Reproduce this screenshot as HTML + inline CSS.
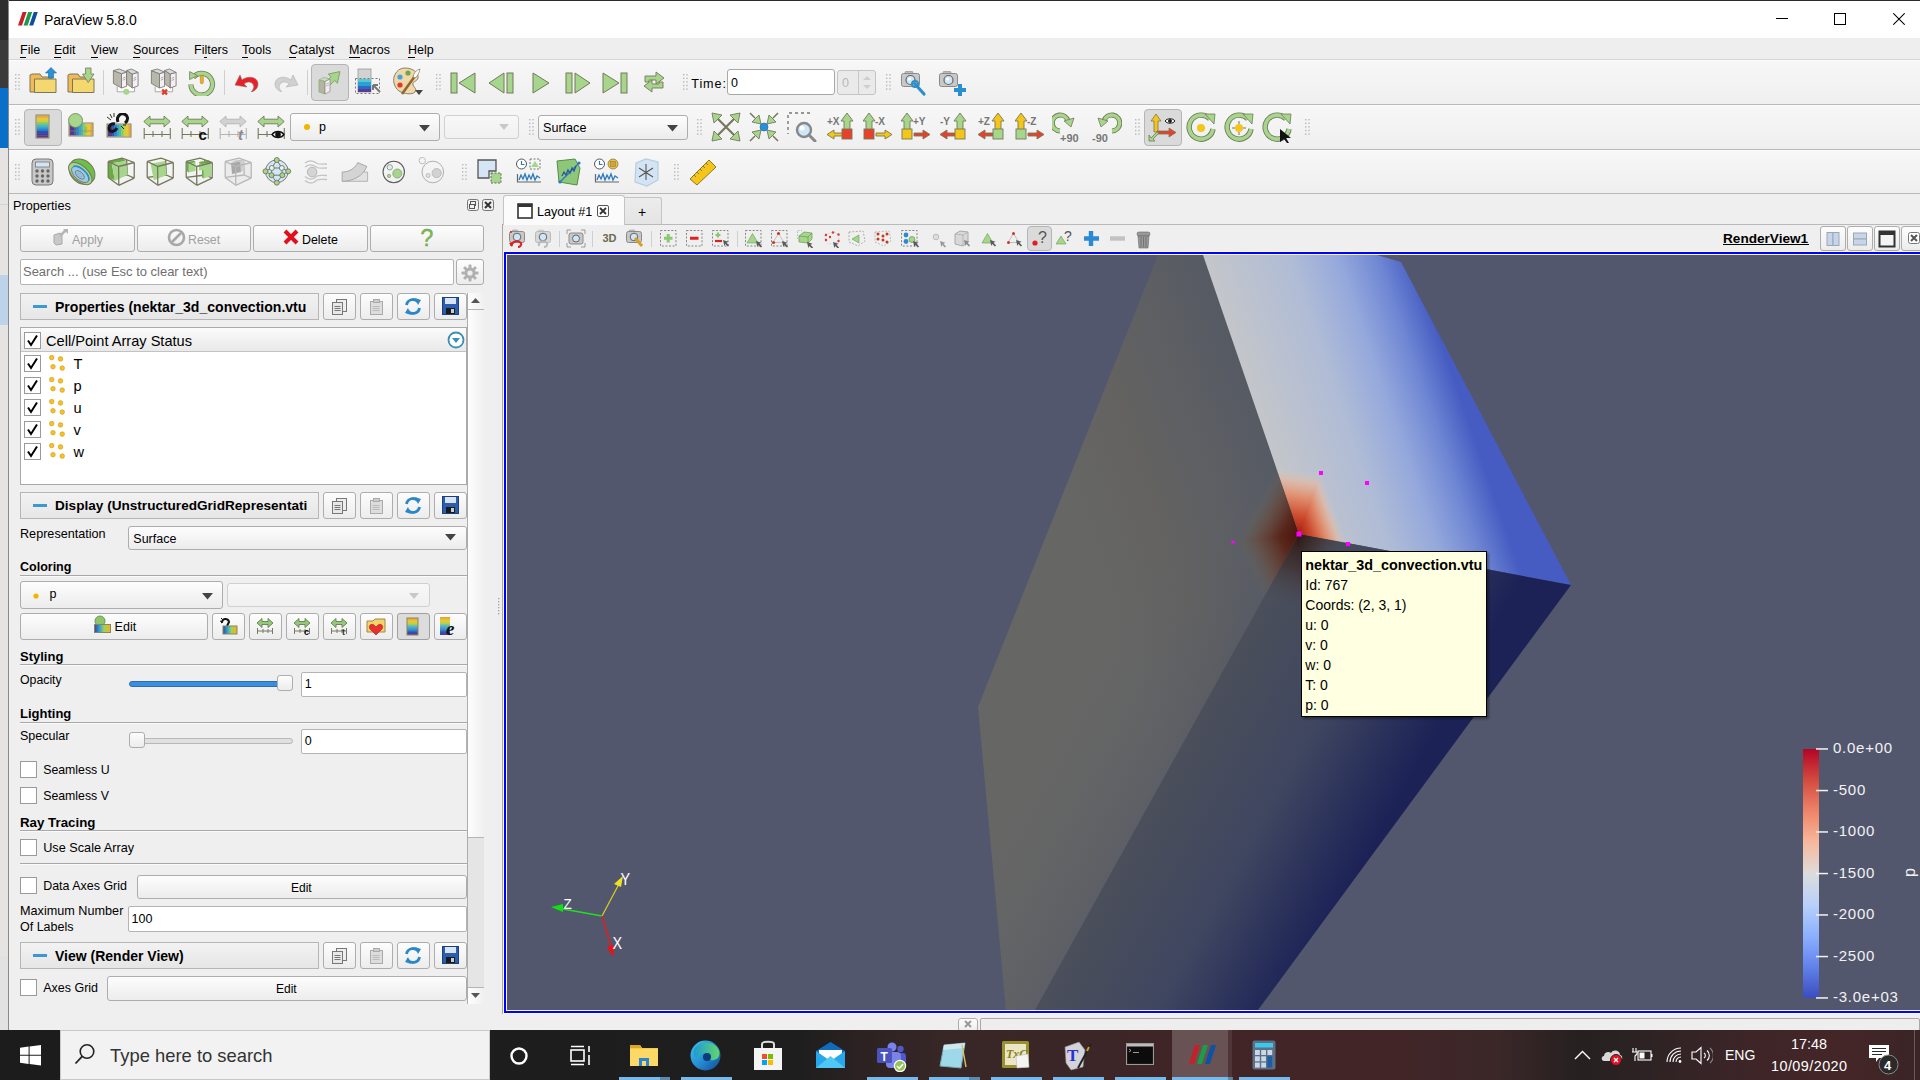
<!DOCTYPE html><html><head><meta charset="utf-8"><style>
html,body{margin:0;padding:0;width:1920px;height:1080px;overflow:hidden;position:relative;background:#e4e4e4;font-family:"Liberation Sans",sans-serif}
.t{position:absolute;white-space:nowrap;line-height:1;font-family:"Liberation Sans",sans-serif}
.r{position:absolute;box-sizing:border-box}
.btn{position:absolute;box-sizing:border-box;border:1px solid #adadad;border-radius:3px;background:linear-gradient(#fdfdfd,#ececec)}
.inp{position:absolute;box-sizing:border-box;border:1px solid #b4b4b4;border-radius:2px;background:#fff}
.cb{position:absolute;box-sizing:border-box;border:1px solid #9a9a9a;background:#fff;width:17px;height:17px}
.tb{position:absolute;left:9px;width:1911px;box-sizing:border-box;background:linear-gradient(#f7f7f7,#efefef);border-top:1px solid #fcfcfc;border-bottom:1px solid #b9b9b9}
</style></head><body>
<div class="r" style="left:0px;top:0px;width:9px;height:40px;background:#2d2d2d"></div>
<div class="r" style="left:0px;top:40px;width:9px;height:48px;background:#3a3a3a"></div>
<div class="r" style="left:0px;top:88px;width:9px;height:60px;background:#0a6fc9"></div>
<div class="r" style="left:0px;top:149px;width:9px;height:126px;background:#e5e4e2"></div>
<div class="r" style="left:0px;top:204px;width:9px;height:1px;background:#d4d4d4"></div>
<div class="r" style="left:0px;top:275px;width:9px;height:50px;background:#bcd3ea"></div>
<div class="r" style="left:0px;top:325px;width:9px;height:631px;background:#e5e4e2"></div>
<div class="r" style="left:0px;top:956px;width:9px;height:74px;background:#e2e2e2"></div>
<div class="r" style="left:8px;top:0px;width:1px;height:1030px;background:#8a8a8a"></div>
<div class="r" style="left:9px;top:0px;width:1911px;height:38px;background:#fff;border-top:1px solid #2b2b2b"></div>
<svg class="r" style="left:18px;top:12px;" width="20" height="14" viewBox="0 0 20 14"><polygon points="4.6,0 8.6,0 4,13.5 0,13.5" fill="#c42128"/><polygon points="10.2,0 14.2,0 9.6,13.5 5.6,13.5" fill="#1d9a48"/><polygon points="15.8,0 19.8,0 15.2,13.5 11.2,13.5" fill="#0d4f9c"/></svg>
<div class="t" style="left:44px;top:13.05px;font-size:14.0px;color:#000;letter-spacing:-0.15px">ParaView 5.8.0</div>
<div class="r" style="left:1776px;top:18px;width:12px;height:1px;background:#000"></div>
<div class="r" style="left:1834px;top:13px;width:12px;height:12px;border:1px solid #000"></div>
<svg class="r" style="left:1893px;top:13px;" width="12" height="12" viewBox="0 0 12 12"><path d="M0.3,0.3L11.7,11.7M11.7,0.3L0.3,11.7" stroke="#000" stroke-width="1.05"/></svg>
<div class="r" style="left:9px;top:38px;width:1911px;height:22px;background:#eeeeee;border-bottom:1px solid #d6d6d6"></div>
<div class="t" style="left:20px;top:43.92px;font-size:12.5px;color:#000;">File</div>
<div class="t" style="left:54px;top:43.92px;font-size:12.5px;color:#000;">Edit</div>
<div class="t" style="left:91px;top:43.92px;font-size:12.5px;color:#000;">View</div>
<div class="t" style="left:133px;top:43.92px;font-size:12.5px;color:#000;">Sources</div>
<div class="t" style="left:194px;top:43.92px;font-size:12.5px;color:#000;">Filters</div>
<div class="t" style="left:242px;top:43.92px;font-size:12.5px;color:#000;">Tools</div>
<div class="t" style="left:289px;top:43.92px;font-size:12.5px;color:#000;">Catalyst</div>
<div class="t" style="left:349px;top:43.92px;font-size:12.5px;color:#000;">Macros</div>
<div class="t" style="left:408px;top:43.92px;font-size:12.5px;color:#000;">Help</div>
<div class="r" style="left:20px;top:57px;width:6px;height:1px;background:#000"></div>
<div class="r" style="left:54px;top:57px;width:7px;height:1px;background:#000"></div>
<div class="r" style="left:91px;top:57px;width:7px;height:1px;background:#000"></div>
<div class="r" style="left:133px;top:57px;width:7px;height:1px;background:#000"></div>
<div class="r" style="left:242px;top:57px;width:6px;height:1px;background:#000"></div>
<div class="r" style="left:289px;top:57px;width:7px;height:1px;background:#000"></div>
<div class="r" style="left:349px;top:57px;width:11px;height:1px;background:#000"></div>
<div class="r" style="left:408px;top:57px;width:7px;height:1px;background:#000"></div>
<div class="r" style="left:204px;top:57px;width:3px;height:1px;background:#000"></div>
<div class="tb" style="top:60px;height:45px"></div>
<div class="tb" style="top:105px;height:45px"></div>
<div class="tb" style="top:150px;height:44px"></div>
<div class="r" style="left:9px;top:194px;width:1911px;height:836px;background:#efefef"></div>
<svg class="r" style="left:15px;top:74px;" width="6" height="19.0" viewBox="0 0 6 19.0"><rect x="0.0" y="0.0" width="1.4" height="1.4" fill="#b8b8b8"/><rect x="3.3" y="0.0" width="1.4" height="1.4" fill="#b8b8b8"/><rect x="0.0" y="3.6" width="1.4" height="1.4" fill="#b8b8b8"/><rect x="3.3" y="3.6" width="1.4" height="1.4" fill="#b8b8b8"/><rect x="0.0" y="7.2" width="1.4" height="1.4" fill="#b8b8b8"/><rect x="3.3" y="7.2" width="1.4" height="1.4" fill="#b8b8b8"/><rect x="0.0" y="10.8" width="1.4" height="1.4" fill="#b8b8b8"/><rect x="3.3" y="10.8" width="1.4" height="1.4" fill="#b8b8b8"/><rect x="0.0" y="14.4" width="1.4" height="1.4" fill="#b8b8b8"/><rect x="3.3" y="14.4" width="1.4" height="1.4" fill="#b8b8b8"/></svg>
<svg class="r" style="left:29px;top:67px;" width="28" height="27" viewBox="0 0 28 27"><path d="M1,8 L1,25 L22,25 L22,10 L13,10 L11,7 L3,7Z" fill="#f3b957" stroke="#76785c" stroke-width="1"/><path d="M5.5,12 L27,12 L27,25.5 L5.5,25.5Z" fill="#f5d770" stroke="#76785c" stroke-width="1"/><path d="M22,0.5 L27.5,6 L24.5,6 L24.5,11 L19.5,11 L19.5,6 L16.5,6Z" fill="#2a90d8" stroke="#1a6aa0" stroke-width="0.6"/></svg>
<svg class="r" style="left:67px;top:67px;" width="28" height="27" viewBox="0 0 28 27"><path d="M1,8 L1,25 L22,25 L22,10 L13,10 L11,7 L3,7Z" fill="#f3b957" stroke="#76785c" stroke-width="1"/><path d="M5.5,12 L27,12 L27,25.5 L5.5,25.5Z" fill="#f5d770" stroke="#76785c" stroke-width="1"/><path d="M18.5,1 L24,1 L24,7 L27,7 L21.2,15.5 L15.5,7 L18.5,7Z" fill="#a5d68c" stroke="#76785c" stroke-width="0.8"/></svg>
<div class="r" style="left:103px;top:70px;width:1px;height:25px;background:#cfcfcf"></div>
<svg class="r" style="left:110px;top:64px;" width="30" height="32" viewBox="0 0 30 32"><path d="M7.2,22.5 L7.2,27.8 L24.6,27.8 L24.6,22.5" fill="#fff" stroke="#a8a8a8" stroke-width="1"/><path d="M3.4,6.6 L11.5,9.7 L11.5,24.0 L3.4,19.5Z" fill="#b8b8a8" stroke="#7c7c78" stroke-width="0.9" stroke-linejoin="round"/><path d="M11.5,9.7 L16.6,8.0 L16.6,22.3 L11.5,24.0Z" fill="#f6eef4" stroke="#7c7c78" stroke-width="0.9" stroke-linejoin="round"/><path d="M3.4,6.6 L9.3,5.0 L16.6,8.0 L11.5,9.7Z" fill="#d6dada" stroke="#7c7c78" stroke-width="0.9" stroke-linejoin="round"/><path d="M12.8,14.2 l2.6,-1.2 M12.8,16.2 l2.6,-1.2" stroke="#888" stroke-width="0.7"/><path d="M16.6,6.5 L22.3,10.0 L22.3,24.0 L16.6,19.5Z" fill="#b8b8a8" stroke="#7c7c78" stroke-width="0.9" stroke-linejoin="round"/><path d="M22.3,10.0 L28.1,8.4 L28.1,21.8 L22.3,24.0Z" fill="#f6eef4" stroke="#7c7c78" stroke-width="0.9" stroke-linejoin="round"/><path d="M16.6,6.5 L21.5,5.0 L28.1,8.4 L22.3,10.0Z" fill="#d6dada" stroke="#7c7c78" stroke-width="0.9" stroke-linejoin="round"/><path d="M23.6,14.5 l2.6,-1.2 M23.6,16.5 l2.6,-1.2" stroke="#888" stroke-width="0.7"/><circle cx="16.3" cy="27.8" r="3" fill="#a5d68c"/></svg>
<svg class="r" style="left:148px;top:64px;" width="30" height="32" viewBox="0 0 30 32"><path d="M7.2,22.5 L7.2,27.8 L24.6,27.8 L24.6,22.5" fill="#fff" stroke="#a8a8a8" stroke-width="1"/><path d="M3.4,6.6 L11.5,9.7 L11.5,24.0 L3.4,19.5Z" fill="#b8b8a8" stroke="#7c7c78" stroke-width="0.9" stroke-linejoin="round"/><path d="M11.5,9.7 L16.6,8.0 L16.6,22.3 L11.5,24.0Z" fill="#f6eef4" stroke="#7c7c78" stroke-width="0.9" stroke-linejoin="round"/><path d="M3.4,6.6 L9.3,5.0 L16.6,8.0 L11.5,9.7Z" fill="#d6dada" stroke="#7c7c78" stroke-width="0.9" stroke-linejoin="round"/><path d="M12.8,14.2 l2.6,-1.2 M12.8,16.2 l2.6,-1.2" stroke="#888" stroke-width="0.7"/><path d="M16.6,6.5 L22.3,10.0 L22.3,24.0 L16.6,19.5Z" fill="#b8b8a8" stroke="#7c7c78" stroke-width="0.9" stroke-linejoin="round"/><path d="M22.3,10.0 L28.1,8.4 L28.1,21.8 L22.3,24.0Z" fill="#f6eef4" stroke="#7c7c78" stroke-width="0.9" stroke-linejoin="round"/><path d="M16.6,6.5 L21.5,5.0 L28.1,8.4 L22.3,10.0Z" fill="#d6dada" stroke="#7c7c78" stroke-width="0.9" stroke-linejoin="round"/><path d="M23.6,14.5 l2.6,-1.2 M23.6,16.5 l2.6,-1.2" stroke="#888" stroke-width="0.7"/><path d="M14.2,25.6 L19,30.4 M19,25.6 L14.2,30.4" stroke="#e03a2a" stroke-width="2.2"/></svg>
<svg class="r" style="left:188px;top:68px;" width="28" height="28" viewBox="0 0 28 28"><path d="M5.2,9.5 A10.8,10.8 0 1 1 2.9,16.5" fill="none" stroke="#76785c" stroke-width="5.2"/><path d="M5.2,9.5 A10.8,10.8 0 1 1 2.9,16.5" fill="none" stroke="#a5d68c" stroke-width="3.6"/><path d="M1.6,3.6 L9.6,7.6 L1.6,11.6Z" fill="#a5d68c" stroke="#76785c" stroke-width="0.8"/><rect x="12.3" y="7.3" width="3" height="8.5" rx="1.4" fill="#f2b020" stroke="#9a7a20" stroke-width="0.5"/></svg>
<div class="r" style="left:224px;top:70px;width:1px;height:25px;background:#cfcfcf"></div>
<svg class="r" style="left:234px;top:72px;" width="27" height="20" viewBox="0 0 27 20"><path d="M1,13 L6,3 L8,8 C14,3 24,5 24,12 C24,17 20,19 17,20 C20,17 21,14 18,11 C15,9 12,10 10,12 L13,15Z" fill="#e8202a" stroke="#8a6a5a" stroke-width="0.6"/></svg>
<svg class="r" style="left:272px;top:72px;" width="27" height="20" viewBox="0 0 27 20"><path d="M26,13 L21,3 L19,8 C13,3 3,5 3,12 C3,17 7,19 10,20 C7,17 6,14 9,11 C12,9 15,10 17,12 L14,15Z" fill="#d0d0d0" stroke="#b0b0b0" stroke-width="0.6"/></svg>
<div class="r" style="left:307px;top:70px;width:1px;height:25px;background:#cfcfcf"></div>
<div class="r" style="left:311px;top:64px;width:38px;height:37px;background:#dadada;border:1px solid #b5b5b5;border-radius:4px"></div>
<svg class="r" style="left:317px;top:68px;" width="27" height="27" viewBox="0 0 27 27"><path d="M0,-2.6 L9,-2.6 L9,-6.5 L19,0 L9,6.5 L9,2.6 L0,2.6Z" fill="#a5d68c" stroke="#7a9a60" stroke-width="0.8" transform="translate(9.5,17) rotate(-45)"/><path d="M2,12 L7,9.5 L13,11 L8,13.5Z" fill="#d6d6d0" stroke="#8ab070" stroke-width="0.7"/><path d="M2,12 L8,13.5 L8,26 L2,24Z" fill="#b4b4a6" stroke="#8ab070" stroke-width="0.8"/><path d="M8,13.5 L13,11 L13,23.5 L8,26Z" fill="#f2eaf2" stroke="#7a7a70" stroke-width="0.6"/><path d="M9,16 L12,15 M9,18 L12,17" stroke="#888" stroke-width="0.5"/></svg>
<svg class="r" style="left:355px;top:68px;" width="27" height="27" viewBox="0 0 27 27"><rect x="3" y="1" width="13" height="23" fill="#d2d2d2" stroke="#999" stroke-width="0.8"/><rect x="3" y="11" width="13" height="13" fill="url(#cmapv2)"/><rect x="0.5" y="10.5" width="24" height="15" fill="none" stroke="#777" stroke-dasharray="2,2"/><path d="M18,17 L25,24 M18,17 L18,22 M18,17 L23,17" stroke="#777" stroke-width="2"/></svg>
<svg width="0" height="0" style="position:absolute"><defs><linearGradient id="cmapv2" x1="0" x2="0" y1="0" y2="1"><stop offset="0" stop-color="#58c8d0"/><stop offset="0.25" stop-color="#58c8d0"/><stop offset="0.25" stop-color="#2aa0d8"/><stop offset="0.5" stop-color="#2aa0d8"/><stop offset="0.5" stop-color="#2a6ac0"/><stop offset="0.75" stop-color="#2a6ac0"/><stop offset="0.75" stop-color="#5a3a98"/><stop offset="1" stop-color="#5a3a98"/></linearGradient></defs></svg>
<svg class="r" style="left:392px;top:67px;" width="32" height="30" viewBox="0 0 32 30"><path d="M13,1 C21,1 27,6 26,11 C25,15 20,14 21,18 C22,21 25,21 23,25 C20,28 12,27 7,24 C2,20 1,14 2,10 C4,4 8,1 13,1Z" fill="#f4d7a8" stroke="#76785c" stroke-width="0.9"/><circle cx="8" cy="10" r="2.6" fill="#3aa5e0"/><circle cx="16" cy="6" r="2.6" fill="#6aa84a"/><circle cx="8" cy="18" r="2.6" fill="#e03a2a"/><path d="M10,27 L23,9" stroke="#8a6a30" stroke-width="2.6"/><path d="M21,10 C22,5 25,3 28,2 C27,6 26,9 23,11Z" fill="#fff" stroke="#76785c" stroke-width="0.7"/><path d="M23,23 L31,23 L27,28Z" fill="#444"/></svg>
<svg class="r" style="left:436px;top:74px;" width="6" height="19.0" viewBox="0 0 6 19.0"><rect x="0.0" y="0.0" width="1.4" height="1.4" fill="#b8b8b8"/><rect x="3.3" y="0.0" width="1.4" height="1.4" fill="#b8b8b8"/><rect x="0.0" y="3.6" width="1.4" height="1.4" fill="#b8b8b8"/><rect x="3.3" y="3.6" width="1.4" height="1.4" fill="#b8b8b8"/><rect x="0.0" y="7.2" width="1.4" height="1.4" fill="#b8b8b8"/><rect x="3.3" y="7.2" width="1.4" height="1.4" fill="#b8b8b8"/><rect x="0.0" y="10.8" width="1.4" height="1.4" fill="#b8b8b8"/><rect x="3.3" y="10.8" width="1.4" height="1.4" fill="#b8b8b8"/><rect x="0.0" y="14.4" width="1.4" height="1.4" fill="#b8b8b8"/><rect x="3.3" y="14.4" width="1.4" height="1.4" fill="#b8b8b8"/></svg>
<svg class="r" style="left:450px;top:72px;" width="27" height="23" viewBox="0 0 27 23"><rect x="1" y="1" width="6" height="20" fill="#a5d68c" stroke="#76785c"/><path d="M25,1 L25,21 L9,11Z" fill="#a5d68c" stroke="#76785c"/></svg>
<svg class="r" style="left:488px;top:72px;" width="27" height="23" viewBox="0 0 27 23"><path d="M16,1 L16,21 L1,11Z" fill="#a5d68c" stroke="#76785c"/><rect x="19" y="1" width="6" height="20" fill="#a5d68c" stroke="#76785c"/></svg>
<svg class="r" style="left:532px;top:72px;" width="27" height="23" viewBox="0 0 27 23"><path d="M1,1 L1,21 L17,11Z" fill="#a5d68c" stroke="#76785c"/></svg>
<svg class="r" style="left:565px;top:72px;" width="27" height="23" viewBox="0 0 27 23"><rect x="1" y="1" width="6" height="20" fill="#a5d68c" stroke="#76785c"/><path d="M10,1 L10,21 L25,11Z" fill="#a5d68c" stroke="#76785c"/></svg>
<svg class="r" style="left:602px;top:72px;" width="27" height="23" viewBox="0 0 27 23"><path d="M1,1 L1,21 L17,11Z" fill="#a5d68c" stroke="#76785c"/><rect x="19" y="1" width="6" height="20" fill="#a5d68c" stroke="#76785c"/></svg>
<svg class="r" style="left:642px;top:70px;" width="24" height="25" viewBox="0 0 24 25"><path d="M3,12 L3,6 L14,6 L14,2 L22,8 L14,14 L14,10 L7,10 L7,12Z" fill="#a5d68c" stroke="#76785c" stroke-width="0.9"/><path d="M21,12 L21,18 L10,18 L10,22 L2,16 L10,10 L10,14 L17,14 L17,12Z" fill="#a5d68c" stroke="#76785c" stroke-width="0.9"/></svg>
<svg class="r" style="left:683px;top:74px;" width="6" height="19.0" viewBox="0 0 6 19.0"><rect x="0.0" y="0.0" width="1.4" height="1.4" fill="#b8b8b8"/><rect x="3.3" y="0.0" width="1.4" height="1.4" fill="#b8b8b8"/><rect x="0.0" y="3.6" width="1.4" height="1.4" fill="#b8b8b8"/><rect x="3.3" y="3.6" width="1.4" height="1.4" fill="#b8b8b8"/><rect x="0.0" y="7.2" width="1.4" height="1.4" fill="#b8b8b8"/><rect x="3.3" y="7.2" width="1.4" height="1.4" fill="#b8b8b8"/><rect x="0.0" y="10.8" width="1.4" height="1.4" fill="#b8b8b8"/><rect x="3.3" y="10.8" width="1.4" height="1.4" fill="#b8b8b8"/><rect x="0.0" y="14.4" width="1.4" height="1.4" fill="#b8b8b8"/><rect x="3.3" y="14.4" width="1.4" height="1.4" fill="#b8b8b8"/></svg>
<div class="t" style="left:691.3px;top:78.03px;font-size:12.6px;color:#000;letter-spacing:0.9px">Time:</div>
<div class="inp" style="left:727px;top:69px;width:108px;height:26px;border-color:#a8a8a8;border-radius:3px"></div>
<div class="t" style="left:731px;top:77.42px;font-size:12.5px;color:#000;">0</div>
<div class="r" style="left:837px;top:70px;width:39px;height:25px;background:#eaeaea;border:1px solid #c4c4c4;border-radius:3px"></div>
<div class="r" style="left:858px;top:71px;width:1px;height:23px;background:#c8c8c8"></div>
<div class="t" style="left:842px;top:77.42px;font-size:12.5px;color:#b8b8b8;">0</div>
<svg class="r" style="left:860px;top:73px;" width="14" height="19" viewBox="0 0 14 19"><path d="M3,7 L7,3 L11,7Z" fill="#cfcfcf"/><path d="M3,12 L7,16 L11,12Z" fill="#cfcfcf"/></svg>
<svg class="r" style="left:886px;top:74px;" width="6" height="19.0" viewBox="0 0 6 19.0"><rect x="0.0" y="0.0" width="1.4" height="1.4" fill="#b8b8b8"/><rect x="3.3" y="0.0" width="1.4" height="1.4" fill="#b8b8b8"/><rect x="0.0" y="3.6" width="1.4" height="1.4" fill="#b8b8b8"/><rect x="3.3" y="3.6" width="1.4" height="1.4" fill="#b8b8b8"/><rect x="0.0" y="7.2" width="1.4" height="1.4" fill="#b8b8b8"/><rect x="3.3" y="7.2" width="1.4" height="1.4" fill="#b8b8b8"/><rect x="0.0" y="10.8" width="1.4" height="1.4" fill="#b8b8b8"/><rect x="3.3" y="10.8" width="1.4" height="1.4" fill="#b8b8b8"/><rect x="0.0" y="14.4" width="1.4" height="1.4" fill="#b8b8b8"/><rect x="3.3" y="14.4" width="1.4" height="1.4" fill="#b8b8b8"/></svg>
<svg class="r" style="left:901px;top:70px;" width="30" height="27" viewBox="0 0 30 27"><rect x="4" y="1.5" width="8" height="3" rx="1" fill="#bbb" stroke="#888" stroke-width="0.6"/><rect x="0.5" y="3.5" width="18" height="13" rx="2" fill="#c8c8c8" stroke="#8a8a8a"/><circle cx="9.5" cy="10" r="4.5" fill="#cfe6f6" stroke="#666" stroke-width="1.2"/><circle cx="8.6" cy="9" r="1.5" fill="#fff"/><path d="M14,14 L23,24" stroke="#2a8fc8" stroke-width="3.2" stroke-linecap="round"/><circle cx="14" cy="14" r="3" fill="none" stroke="#2a8fc8" stroke-width="2"/></svg>
<svg class="r" style="left:939px;top:70px;" width="30" height="27" viewBox="0 0 30 27"><rect x="4" y="1.5" width="8" height="3" rx="1" fill="#bbb" stroke="#888" stroke-width="0.6"/><rect x="0.5" y="3.5" width="18" height="13" rx="2" fill="#c8c8c8" stroke="#8a8a8a"/><circle cx="9.5" cy="10" r="4.5" fill="#cfe6f6" stroke="#666" stroke-width="1.2"/><circle cx="8.6" cy="9" r="1.5" fill="#fff"/><path d="M21,14 L21,26 M15,20 L27,20" stroke="#2a8fd0" stroke-width="4"/></svg>
<svg class="r" style="left:15px;top:119px;" width="6" height="19.0" viewBox="0 0 6 19.0"><rect x="0.0" y="0.0" width="1.4" height="1.4" fill="#b8b8b8"/><rect x="3.3" y="0.0" width="1.4" height="1.4" fill="#b8b8b8"/><rect x="0.0" y="3.6" width="1.4" height="1.4" fill="#b8b8b8"/><rect x="3.3" y="3.6" width="1.4" height="1.4" fill="#b8b8b8"/><rect x="0.0" y="7.2" width="1.4" height="1.4" fill="#b8b8b8"/><rect x="3.3" y="7.2" width="1.4" height="1.4" fill="#b8b8b8"/><rect x="0.0" y="10.8" width="1.4" height="1.4" fill="#b8b8b8"/><rect x="3.3" y="10.8" width="1.4" height="1.4" fill="#b8b8b8"/><rect x="0.0" y="14.4" width="1.4" height="1.4" fill="#b8b8b8"/><rect x="3.3" y="14.4" width="1.4" height="1.4" fill="#b8b8b8"/></svg>
<div class="r" style="left:24px;top:109px;width:38px;height:37px;background:#dadada;border:1px solid #b5b5b5;border-radius:4px"></div>
<svg class="r" style="left:35px;top:114px;" width="16" height="25" viewBox="0 0 16 25"><rect x="1.5" y="1.50" width="12" height="2.50" fill="#e8a83a"/><rect x="1.5" y="3.70" width="12" height="2.50" fill="#e8c83a"/><rect x="1.5" y="5.90" width="12" height="2.50" fill="#c8d048"/><rect x="1.5" y="8.10" width="12" height="2.50" fill="#90c858"/><rect x="1.5" y="10.30" width="12" height="2.50" fill="#50b8a8"/><rect x="1.5" y="12.50" width="12" height="2.50" fill="#30a8d0"/><rect x="1.5" y="14.70" width="12" height="2.50" fill="#2a80d0"/><rect x="1.5" y="16.90" width="12" height="2.50" fill="#2a50b0"/><rect x="1.5" y="19.10" width="12" height="2.50" fill="#4a3a98"/><rect x="1.5" y="21.30" width="12" height="2.50" fill="#5a3a88"/><rect x="1" y="1" width="13" height="23" fill="none" stroke="#8a8560"/></svg>
<svg class="r" style="left:68px;top:113px;" width="26" height="26" viewBox="0 0 26 26"><rect x="1.50" y="10.5" width="2.60" height="12" fill="#5a3a88"/><rect x="3.80" y="10.5" width="2.60" height="12" fill="#4a3a98"/><rect x="6.10" y="10.5" width="2.60" height="12" fill="#2a50b0"/><rect x="8.40" y="10.5" width="2.60" height="12" fill="#2a80d0"/><rect x="10.70" y="10.5" width="2.60" height="12" fill="#30a8d0"/><rect x="13.00" y="10.5" width="2.60" height="12" fill="#50b8a8"/><rect x="15.30" y="10.5" width="2.60" height="12" fill="#90c858"/><rect x="17.60" y="10.5" width="2.60" height="12" fill="#c8d048"/><rect x="19.90" y="10.5" width="2.60" height="12" fill="#e8c83a"/><rect x="22.20" y="10.5" width="2.60" height="12" fill="#e8a83a"/><rect x="1" y="10" width="24" height="13" fill="none" stroke="#8a8560"/><path d="M7,13v9M18,14v6M2,18h22" stroke="#8a8560" stroke-width="0.8" opacity="0.7"/><circle cx="7.5" cy="7.5" r="7" fill="#a5d68c" stroke="#76785c" stroke-width="0.8"/></svg>
<svg class="r" style="left:106px;top:113px;" width="26" height="26" viewBox="0 0 26 26"><rect x="1.50" y="11.5" width="2.60" height="12" fill="#5a3a88"/><rect x="3.80" y="11.5" width="2.60" height="12" fill="#4a3a98"/><rect x="6.10" y="11.5" width="2.60" height="12" fill="#2a50b0"/><rect x="8.40" y="11.5" width="2.60" height="12" fill="#2a80d0"/><rect x="10.70" y="11.5" width="2.60" height="12" fill="#30a8d0"/><rect x="13.00" y="11.5" width="2.60" height="12" fill="#50b8a8"/><rect x="15.30" y="11.5" width="2.60" height="12" fill="#90c858"/><rect x="17.60" y="11.5" width="2.60" height="12" fill="#c8d048"/><rect x="19.90" y="11.5" width="2.60" height="12" fill="#e8c83a"/><rect x="22.20" y="11.5" width="2.60" height="12" fill="#e8a83a"/><rect x="1" y="11" width="24" height="13" fill="none" stroke="#8a8560"/><path d="M12,9 C10,4 14,0 18,1 C22,2 23,7 19,10" fill="none" stroke="#151515" stroke-width="3"/><path d="M11,15 C8,20 3,19 3,15 C3,12 6,10 9,11" fill="none" stroke="#151515" stroke-width="3"/><path d="M1,4L5,7M4,1L6,5M8,0L8,4M15,13L18,16M17,12L20,12" stroke="#151515" stroke-width="0.9"/></svg>
<svg class="r" style="left:143px;top:114px;" width="29" height="26" viewBox="0 0 29 26"><path d="M0.8,7.5 L7,2 L7,5.2 L21,5.2 L21,2 L27.2,7.5 L21,13 L21,9.8 L7,9.8 L7,13Z" fill="#a5d68c" stroke="#76785c" stroke-width="0.9"/><path d="M1,20.5h26.5M1.2,14v11M10,17v6M19,17v6M27.3,14v11" stroke="#76785c" stroke-width="1.1"/></svg>
<svg class="r" style="left:181px;top:114px;" width="29" height="26" viewBox="0 0 29 26"><path d="M0.8,7.5 L7,2 L7,5.2 L21,5.2 L21,2 L27.2,7.5 L21,13 L21,9.8 L7,9.8 L7,13Z" fill="#a5d68c" stroke="#76785c" stroke-width="0.9"/><path d="M1,20.5h26.5M1.2,14v11M10,17v6M19,17v6M27.3,14v11" stroke="#76785c" stroke-width="1.1"/><text x="17.5" y="25.5" font-size="15" font-weight="bold" font-family="Liberation Sans" fill="#111">c</text></svg>
<svg class="r" style="left:219px;top:114px;" width="29" height="26" viewBox="0 0 29 26"><path d="M0.8,7.5 L7,2 L7,5.2 L21,5.2 L21,2 L27.2,7.5 L21,13 L21,9.8 L7,9.8 L7,13Z" fill="#d2d2d2" stroke="#b4b4b4" stroke-width="0.9"/><path d="M1,20.5h26.5M1.2,14v11M10,17v6M19,17v6M27.3,14v11" stroke="#b4b4b4" stroke-width="1.1"/><text x="19" y="25.5" font-size="15" font-weight="bold" font-style="italic" font-family="Liberation Sans" fill="#8a8a8a">t</text></svg>
<svg class="r" style="left:257px;top:114px;" width="29" height="26" viewBox="0 0 29 26"><path d="M0.8,7.5 L7,2 L7,5.2 L21,5.2 L21,2 L27.2,7.5 L21,13 L21,9.8 L7,9.8 L7,13Z" fill="#a5d68c" stroke="#76785c" stroke-width="0.9"/><path d="M1,20.5h26.5M1.2,14v11M10,17v6M19,17v6M27.3,14v11" stroke="#76785c" stroke-width="1.1"/><path d="M15,20.5 C18,16.5 24,16.5 27,20.5 C24,24.5 18,24.5 15,20.5Z" fill="#fff" stroke="#111" stroke-width="1.3"/><circle cx="21" cy="20.5" r="2.8" fill="#111"/></svg>
<div class="btn" style="left:290px;top:113px;width:150px;height:28px"></div>
<svg class="r" style="left:303px;top:123px;" width="8" height="8" viewBox="0 0 8 8"><circle cx="4" cy="4" r="3" fill="#f3b400"/></svg>
<div class="t" style="left:319px;top:121.42px;font-size:12.5px;color:#000;">p</div>
<svg class="r" style="left:419px;top:125px;" width="12" height="7" viewBox="0 0 12 7"><path d="M0,0L11,0L5.5,6.5Z" fill="#444"/></svg>
<div class="btn" style="left:444px;top:115px;width:75px;height:24px;border-color:#d0d0d0;background:linear-gradient(#f8f8f8,#f0f0f0)"></div>
<svg class="r" style="left:499px;top:124px;" width="11" height="6" viewBox="0 0 11 6"><path d="M0,0L10,0L5,6Z" fill="#c8c8c8"/></svg>
<svg class="r" style="left:529px;top:119px;" width="6" height="19.0" viewBox="0 0 6 19.0"><rect x="0.0" y="0.0" width="1.4" height="1.4" fill="#b8b8b8"/><rect x="3.3" y="0.0" width="1.4" height="1.4" fill="#b8b8b8"/><rect x="0.0" y="3.6" width="1.4" height="1.4" fill="#b8b8b8"/><rect x="3.3" y="3.6" width="1.4" height="1.4" fill="#b8b8b8"/><rect x="0.0" y="7.2" width="1.4" height="1.4" fill="#b8b8b8"/><rect x="3.3" y="7.2" width="1.4" height="1.4" fill="#b8b8b8"/><rect x="0.0" y="10.8" width="1.4" height="1.4" fill="#b8b8b8"/><rect x="3.3" y="10.8" width="1.4" height="1.4" fill="#b8b8b8"/><rect x="0.0" y="14.4" width="1.4" height="1.4" fill="#b8b8b8"/><rect x="3.3" y="14.4" width="1.4" height="1.4" fill="#b8b8b8"/></svg>
<div class="btn" style="left:538px;top:115px;width:150px;height:25px"></div>
<div class="t" style="left:543px;top:121.83px;font-size:12.6px;color:#000;">Surface</div>
<svg class="r" style="left:667px;top:125px;" width="12" height="7" viewBox="0 0 12 7"><path d="M0,0L11,0L5.5,6.5Z" fill="#444"/></svg>
<svg class="r" style="left:697px;top:119px;" width="6" height="19.0" viewBox="0 0 6 19.0"><rect x="0.0" y="0.0" width="1.4" height="1.4" fill="#b8b8b8"/><rect x="3.3" y="0.0" width="1.4" height="1.4" fill="#b8b8b8"/><rect x="0.0" y="3.6" width="1.4" height="1.4" fill="#b8b8b8"/><rect x="3.3" y="3.6" width="1.4" height="1.4" fill="#b8b8b8"/><rect x="0.0" y="7.2" width="1.4" height="1.4" fill="#b8b8b8"/><rect x="3.3" y="7.2" width="1.4" height="1.4" fill="#b8b8b8"/><rect x="0.0" y="10.8" width="1.4" height="1.4" fill="#b8b8b8"/><rect x="3.3" y="10.8" width="1.4" height="1.4" fill="#b8b8b8"/><rect x="0.0" y="14.4" width="1.4" height="1.4" fill="#b8b8b8"/><rect x="3.3" y="14.4" width="1.4" height="1.4" fill="#b8b8b8"/></svg>
<svg class="r" style="left:711px;top:112px;" width="30" height="30" viewBox="0 0 30 30"><path d="M4,4 L26,26 M26,4 L4,26" stroke="#76785c" stroke-width="2.2"/><path d="M0,0 L10,2 L2,10Z" fill="#a5d68c" stroke="#76785c" stroke-width="0.9" transform="translate(1,1) rotate(0)"/><path d="M0,0 L10,2 L2,10Z" fill="#a5d68c" stroke="#76785c" stroke-width="0.9" transform="translate(29,1) rotate(90)"/><path d="M0,0 L10,2 L2,10Z" fill="#a5d68c" stroke="#76785c" stroke-width="0.9" transform="translate(29,29) rotate(180)"/><path d="M0,0 L10,2 L2,10Z" fill="#a5d68c" stroke="#76785c" stroke-width="0.9" transform="translate(1,29) rotate(270)"/></svg>
<svg class="r" style="left:749px;top:112px;" width="30" height="30" viewBox="0 0 30 30"><path d="M0,0 L9,2 L2,9Z" fill="#a5d68c" stroke="#76785c" stroke-width="0.9" transform="translate(12,12) rotate(180)"/><path d="M0,0 L9,2 L2,9Z" fill="#a5d68c" stroke="#76785c" stroke-width="0.9" transform="translate(18,12) rotate(270)"/><path d="M0,0 L9,2 L2,9Z" fill="#a5d68c" stroke="#76785c" stroke-width="0.9" transform="translate(18,18) rotate(0)"/><path d="M0,0 L9,2 L2,9Z" fill="#a5d68c" stroke="#76785c" stroke-width="0.9" transform="translate(12,18) rotate(90)"/><path d="M1,1 L6,6 M29,1 L24,6 M29,29 L24,24 M1,29 L6,24" stroke="#76785c" stroke-width="1.5"/><circle cx="15" cy="15" r="4" fill="#2a8fd6" stroke="#1a6aa0" stroke-width="0.6"/></svg>
<svg class="r" style="left:787px;top:112px;" width="30" height="30" viewBox="0 0 30 30"><path d="M1,12 L1,1 L24,1" fill="none" stroke="#777" stroke-width="1.4" stroke-dasharray="3,3"/><path d="M1,15 L1,22" stroke="#777" stroke-width="1.4" stroke-dasharray="3,3"/><circle cx="17" cy="18" r="7" fill="#cfe6f8" stroke="#888" stroke-width="2.4"/><circle cx="15" cy="16" r="2.5" fill="#fff"/><path d="M22,23 L28,29" stroke="#888" stroke-width="3" stroke-linecap="round"/></svg>
<svg class="r" style="left:826px;top:112px;" width="30" height="30" viewBox="0 0 30 30"><path d="M18,20 L18,9 L15,9 L21,1 L27,9 L24,9 L24,20Z" fill="#a5d68c" stroke="#76785c" stroke-width="0.9"/><path d="M17,24 L8,24 L8,27 L1,22.5 L8,18 L8,21 L17,21Z" fill="#f5c518" stroke="#76785c" stroke-width="0.9" transform="translate(0,0)"/><rect x="16" y="17" width="10" height="10" fill="#e8402a" stroke="#76785c" stroke-width="0.9"/><text x="1" y="13" font-size="10" font-weight="bold" font-family="Liberation Sans" fill="#777">+X</text></svg>
<svg class="r" style="left:863px;top:112px;" width="30" height="30" viewBox="0 0 30 30"><path d="M3,20 L3,9 L0,9 L6,1 L12,9 L9,9 L9,20Z" fill="#a5d68c" stroke="#76785c" stroke-width="0.9"/><path d="M13,21 L22,21 L22,18 L29,22.5 L22,27 L22,24 L13,24Z" fill="#f5c518" stroke="#76785c" stroke-width="0.9"/><rect x="1" y="17" width="10" height="10" fill="#e8402a" stroke="#76785c" stroke-width="0.9"/><text x="12" y="13" font-size="10" font-weight="bold" font-family="Liberation Sans" fill="#777">-X</text></svg>
<svg class="r" style="left:901px;top:112px;" width="30" height="30" viewBox="0 0 30 30"><path d="M3,20 L3,9 L0,9 L6,1 L12,9 L9,9 L9,20Z" fill="#a5d68c" stroke="#76785c" stroke-width="0.9"/><path d="M13,21 L22,21 L22,18 L29,22.5 L22,27 L22,24 L13,24Z" fill="#e8402a" stroke="#76785c" stroke-width="0.9"/><rect x="1" y="17" width="10" height="10" fill="#f5c518" stroke="#76785c" stroke-width="0.9"/><text x="12" y="13" font-size="10" font-weight="bold" font-family="Liberation Sans" fill="#777">+Y</text></svg>
<svg class="r" style="left:939px;top:112px;" width="30" height="30" viewBox="0 0 30 30"><path d="M18,20 L18,9 L15,9 L21,1 L27,9 L24,9 L24,20Z" fill="#a5d68c" stroke="#76785c" stroke-width="0.9"/><path d="M17,24 L8,24 L8,27 L1,22.5 L8,18 L8,21 L17,21Z" fill="#e8402a" stroke="#76785c" stroke-width="0.9" transform="translate(0,0)"/><rect x="16" y="17" width="10" height="10" fill="#f5c518" stroke="#76785c" stroke-width="0.9"/><text x="1" y="13" font-size="10" font-weight="bold" font-family="Liberation Sans" fill="#777">-Y</text></svg>
<svg class="r" style="left:977px;top:112px;" width="30" height="30" viewBox="0 0 30 30"><path d="M18,20 L18,9 L15,9 L21,1 L27,9 L24,9 L24,20Z" fill="#f5c518" stroke="#76785c" stroke-width="0.9"/><path d="M17,24 L8,24 L8,27 L1,22.5 L8,18 L8,21 L17,21Z" fill="#e8402a" stroke="#76785c" stroke-width="0.9" transform="translate(0,0)"/><rect x="16" y="17" width="10" height="10" fill="#a5d68c" stroke="#76785c" stroke-width="0.9"/><text x="1" y="13" font-size="10" font-weight="bold" font-family="Liberation Sans" fill="#777">+Z</text></svg>
<svg class="r" style="left:1015px;top:112px;" width="30" height="30" viewBox="0 0 30 30"><path d="M3,20 L3,9 L0,9 L6,1 L12,9 L9,9 L9,20Z" fill="#f5c518" stroke="#76785c" stroke-width="0.9"/><path d="M13,21 L22,21 L22,18 L29,22.5 L22,27 L22,24 L13,24Z" fill="#e8402a" stroke="#76785c" stroke-width="0.9"/><rect x="1" y="17" width="10" height="10" fill="#a5d68c" stroke="#76785c" stroke-width="0.9"/><text x="12" y="13" font-size="10" font-weight="bold" font-family="Liberation Sans" fill="#777">-Z</text></svg>
<svg class="r" style="left:1052px;top:112px;" width="32" height="32" viewBox="0 0 32 32"><path d="M16,9 A8,8 0 1 0 8,19" fill="none" stroke="#76785c" stroke-width="5.2"/><path d="M16,9 A8,8 0 1 0 8,19" fill="none" stroke="#a5d68c" stroke-width="3.4"/><path d="M12,9 L22,6 L19,15Z" fill="#a5d68c" stroke="#76785c" stroke-width="0.8"/><text x="8" y="30" font-size="11" font-weight="bold" font-family="Liberation Sans" fill="#777">+90</text></svg>
<svg class="r" style="left:1090px;top:112px;" width="32" height="32" viewBox="0 0 32 32"><path d="M14,9 A8,8 0 1 1 22,19" fill="none" stroke="#76785c" stroke-width="5.2"/><path d="M14,9 A8,8 0 1 1 22,19" fill="none" stroke="#a5d68c" stroke-width="3.4"/><path d="M18,9 L8,6 L11,15Z" fill="#a5d68c" stroke="#76785c" stroke-width="0.8"/><text x="2" y="30" font-size="11" font-weight="bold" font-family="Liberation Sans" fill="#777">-90</text></svg>
<svg class="r" style="left:1135px;top:119px;" width="6" height="19.0" viewBox="0 0 6 19.0"><rect x="0.0" y="0.0" width="1.4" height="1.4" fill="#b8b8b8"/><rect x="3.3" y="0.0" width="1.4" height="1.4" fill="#b8b8b8"/><rect x="0.0" y="3.6" width="1.4" height="1.4" fill="#b8b8b8"/><rect x="3.3" y="3.6" width="1.4" height="1.4" fill="#b8b8b8"/><rect x="0.0" y="7.2" width="1.4" height="1.4" fill="#b8b8b8"/><rect x="3.3" y="7.2" width="1.4" height="1.4" fill="#b8b8b8"/><rect x="0.0" y="10.8" width="1.4" height="1.4" fill="#b8b8b8"/><rect x="3.3" y="10.8" width="1.4" height="1.4" fill="#b8b8b8"/><rect x="0.0" y="14.4" width="1.4" height="1.4" fill="#b8b8b8"/><rect x="3.3" y="14.4" width="1.4" height="1.4" fill="#b8b8b8"/></svg>
<div class="r" style="left:1144px;top:109px;width:38px;height:37px;background:#dadada;border:1px solid #b5b5b5;border-radius:4px"></div>
<svg class="r" style="left:1148px;top:112px;" width="30" height="30" viewBox="0 0 30 30"><path d="M6,20 L6,9 L3,9 L8,2 L13,9 L10,9 L10,20Z" fill="#f5c518" stroke="#76785c" stroke-width="0.8"/><path d="M9,19 L21,19 L21,16 L28,20.5 L21,25 L21,22 L9,22Z" fill="#e8402a" stroke="#76785c" stroke-width="0.8"/><path d="M9,20 L3,26 L1,23 L1,29 L7,29 L5,27 L11,21Z" fill="#a5d68c" stroke="#76785c" stroke-width="0.8"/><path d="M17,9 C19,6 25,6 27,9 C25,12 19,12 17,9Z" fill="#fff" stroke="#222"/><circle cx="22" cy="9" r="2" fill="#222"/></svg>
<svg class="r" style="left:1186px;top:112px;" width="31" height="31" viewBox="0 0 31 31"><path d="M24,7 A12,12 0 1 0 27,17" fill="none" stroke="#76785c" stroke-width="5.4"/><path d="M24,7 A12,12 0 1 0 27,17" fill="none" stroke="#a5d68c" stroke-width="3.6"/><path d="M19,2 L29,2 L28,12Z" fill="#a5d68c" stroke="#76785c" stroke-width="0.8"/><circle cx="15" cy="16" r="4" fill="#f5c518"/></svg>
<svg class="r" style="left:1224px;top:112px;" width="31" height="31" viewBox="0 0 31 31"><path d="M24,7 A12,12 0 1 0 27,17" fill="none" stroke="#76785c" stroke-width="5.4"/><path d="M24,7 A12,12 0 1 0 27,17" fill="none" stroke="#a5d68c" stroke-width="3.6"/><path d="M19,2 L29,2 L28,12Z" fill="#a5d68c" stroke="#76785c" stroke-width="0.8"/><circle cx="15" cy="16" r="4" fill="#f5c518"/><path d="M15,9v3M15,20v3M8,16h3M19,16h3" stroke="#76785c" stroke-width="1"/></svg>
<svg class="r" style="left:1262px;top:112px;" width="31" height="31" viewBox="0 0 31 31"><path d="M24,7 A12,12 0 1 0 27,17" fill="none" stroke="#76785c" stroke-width="5.4"/><path d="M24,7 A12,12 0 1 0 27,17" fill="none" stroke="#a5d68c" stroke-width="3.6"/><path d="M19,2 L29,2 L28,12Z" fill="#a5d68c" stroke="#76785c" stroke-width="0.8"/><path d="M18,17 L29,26 L24,26 L27,31 L25,31 L22,27 L18,30Z" fill="#111"/></svg>
<svg class="r" style="left:1305px;top:119px;" width="6" height="19.0" viewBox="0 0 6 19.0"><rect x="0.0" y="0.0" width="1.4" height="1.4" fill="#b8b8b8"/><rect x="3.3" y="0.0" width="1.4" height="1.4" fill="#b8b8b8"/><rect x="0.0" y="3.6" width="1.4" height="1.4" fill="#b8b8b8"/><rect x="3.3" y="3.6" width="1.4" height="1.4" fill="#b8b8b8"/><rect x="0.0" y="7.2" width="1.4" height="1.4" fill="#b8b8b8"/><rect x="3.3" y="7.2" width="1.4" height="1.4" fill="#b8b8b8"/><rect x="0.0" y="10.8" width="1.4" height="1.4" fill="#b8b8b8"/><rect x="3.3" y="10.8" width="1.4" height="1.4" fill="#b8b8b8"/><rect x="0.0" y="14.4" width="1.4" height="1.4" fill="#b8b8b8"/><rect x="3.3" y="14.4" width="1.4" height="1.4" fill="#b8b8b8"/></svg>
<svg class="r" style="left:15px;top:164px;" width="6" height="19.0" viewBox="0 0 6 19.0"><rect x="0.0" y="0.0" width="1.4" height="1.4" fill="#b8b8b8"/><rect x="3.3" y="0.0" width="1.4" height="1.4" fill="#b8b8b8"/><rect x="0.0" y="3.6" width="1.4" height="1.4" fill="#b8b8b8"/><rect x="3.3" y="3.6" width="1.4" height="1.4" fill="#b8b8b8"/><rect x="0.0" y="7.2" width="1.4" height="1.4" fill="#b8b8b8"/><rect x="3.3" y="7.2" width="1.4" height="1.4" fill="#b8b8b8"/><rect x="0.0" y="10.8" width="1.4" height="1.4" fill="#b8b8b8"/><rect x="3.3" y="10.8" width="1.4" height="1.4" fill="#b8b8b8"/><rect x="0.0" y="14.4" width="1.4" height="1.4" fill="#b8b8b8"/><rect x="3.3" y="14.4" width="1.4" height="1.4" fill="#b8b8b8"/></svg>
<svg class="r" style="left:31px;top:158px;" width="24" height="28" viewBox="0 0 24 28"><rect x="1" y="1" width="21" height="26" rx="4" fill="#c8c8c8" stroke="#777" stroke-width="1"/><rect x="4.5" y="4" width="14" height="5" fill="#cfe6f8" stroke="#777" stroke-width="0.8"/><circle cx="6.0" cy="13" r="1.7" fill="#666"/><circle cx="11.5" cy="13" r="1.7" fill="#666"/><circle cx="17.0" cy="13" r="1.7" fill="#666"/><circle cx="6.0" cy="18" r="1.7" fill="#666"/><circle cx="11.5" cy="18" r="1.7" fill="#666"/><circle cx="17.0" cy="18" r="1.7" fill="#666"/><circle cx="6.0" cy="23" r="1.7" fill="#666"/><circle cx="11.5" cy="23" r="1.7" fill="#666"/><circle cx="17.0" cy="23" r="1.7" fill="#666"/></svg>
<svg class="r" style="left:66px;top:154px;" width="34" height="36" viewBox="0 0 34 36"><g transform="rotate(42 16 17.7)"><ellipse cx="16" cy="17.7" rx="14.2" ry="11.2" fill="#6cbf48" stroke="#76785c" stroke-width="1"/><ellipse cx="16" cy="20.2" rx="14.2" ry="7.6" fill="#a5d68c" stroke="#76785c" stroke-width="1"/><ellipse cx="16.5" cy="21" rx="10.6" ry="5.4" fill="#9cc8ec" stroke="#76785c" stroke-width="0.9"/><path d="M6.2,19.6 A10.6,5.4 0 0 1 26.8,19.6" fill="none" stroke="#2a90d0" stroke-width="1.6"/><ellipse cx="16.5" cy="21.5" rx="5.5" ry="2.8" fill="none" stroke="#76785c" stroke-width="0.9"/><ellipse cx="16.5" cy="21.5" rx="2.6" ry="1.2" fill="none" stroke="#7aa8c8" stroke-width="0.7"/></g></svg>
<svg class="r" style="left:104px;top:154px;" width="36" height="34" viewBox="0 0 36 34"><path d="M22.6,5.9 L23.3,21.0 M4.2,23.4 L23.3,21.0 M23.3,21.0 L30.2,24.1 " stroke="#76785c" stroke-width="1.3" fill="none"/><path d="M4.2,7.4 L7.7,9.3 L10.8,26.5 L4.2,23.4Z" fill="#6aaa42"/><path d="M4.2,7.4 L18.1,4.2 L22,7 L7.7,9.3Z" fill="#6aaa42"/><path d="M7.7,9.3 L22,7 L23.8,20.8 L11,26.7Z" fill="#a5d68c"/><path d="M4.2,7.4 L18.1,4.2 M18.1,4.2 L30.3,8.5 M30.3,8.5 L14.6,12.5 M14.6,12.5 L4.2,7.4 M4.2,7.4 L4.2,23.4 M14.6,12.5 L14.8,31.3 M30.3,8.5 L30.2,24.1 M4.2,23.4 L14.8,31.3 M14.8,31.3 L30.2,24.1 " stroke="#76785c" stroke-width="1.3" fill="none" stroke-linejoin="round"/></svg>
<svg class="r" style="left:143px;top:154px;" width="36" height="34" viewBox="0 0 36 34"><path d="M22.6,5.9 L23.3,21.0 M4.2,23.4 L23.3,21.0 M23.3,21.0 L30.2,24.1 " stroke="#76785c" stroke-width="1.3" fill="none"/><path d="M7.5,9.75 L22.1,7.1 L23.6,21 L10.9,26.25Z" fill="#a5d68c"/><path d="M4.2,7.4 L18.1,4.2 M18.1,4.2 L30.3,8.5 M30.3,8.5 L14.6,12.5 M14.6,12.5 L4.2,7.4 M4.2,7.4 L4.2,23.4 M14.6,12.5 L14.8,31.3 M30.3,8.5 L30.2,24.1 M4.2,23.4 L14.8,31.3 M14.8,31.3 L30.2,24.1 " stroke="#76785c" stroke-width="1.3" fill="none" stroke-linejoin="round"/></svg>
<svg class="r" style="left:182px;top:154px;" width="36" height="34" viewBox="0 0 36 34"><path d="M22.6,5.9 L23.3,21.0 M4.2,23.4 L23.3,21.0 M23.3,21.0 L30.2,24.1 " stroke="#76785c" stroke-width="1.3" fill="none"/><path d="M5,8.2 L12,6.8 L13.5,8 L13.5,17 L6.5,18.5 L5,17Z" fill="#a5d68c"/><path d="M5,8.2 L12,6.8 L13.5,8 L6.5,9.5Z" fill="#6aaa42"/><path d="M5,8.2 L6.5,9.5 L6.5,18.5 L5,17Z" fill="#6aaa42"/><path d="M17,8 L27,6.5 L29,8.5 L29,22 L21.5,24.5 L20,23 L20,16 L17,16.5Z" fill="#a5d68c"/><path d="M17,8 L27,6.5 L29,8.5 L19,10Z" fill="#6aaa42"/><path d="M20,16 L21.5,16.5 L21.5,24.5 L20,23Z" fill="#6aaa42"/><path d="M4.2,7.4 L18.1,4.2 M18.1,4.2 L30.3,8.5 M30.3,8.5 L14.6,12.5 M14.6,12.5 L4.2,7.4 M4.2,7.4 L4.2,23.4 M14.6,12.5 L14.8,31.3 M30.3,8.5 L30.2,24.1 M4.2,23.4 L14.8,31.3 M14.8,31.3 L30.2,24.1 " stroke="#76785c" stroke-width="1.3" fill="none" stroke-linejoin="round"/></svg>
<svg class="r" style="left:221px;top:154px;" width="36" height="34" viewBox="0 0 36 34"><path d="M4.2,7.4 L18.1,4.2 L30.3,8.5 L30.2,24.1 L14.8,31.3 L4.2,23.4Z" fill="#ebebeb"/><path d="M22.6,5.9 L23.3,21.0 M4.2,23.4 L23.3,21.0 M23.3,21.0 L30.2,24.1 " stroke="#b8b8b8" stroke-width="1.3" fill="none"/><path d="M10,9 L19.5,7.5 L20,18 L11,20Z" fill="#a8a8a8"/><path d="M10,9 L14,6.5 L23,5.5 L19.5,7.5Z" fill="#c2c2c2"/><path d="M19.5,7.5 L23,5.5 L23,16 L20,18Z" fill="#cfcfcf"/><path d="M4.2,7.4 L18.1,4.2 M18.1,4.2 L30.3,8.5 M30.3,8.5 L14.6,12.5 M14.6,12.5 L4.2,7.4 M4.2,7.4 L4.2,23.4 M14.6,12.5 L14.8,31.3 M30.3,8.5 L30.2,24.1 M4.2,23.4 L14.8,31.3 M14.8,31.3 L30.2,24.1 " stroke="#b8b8b8" stroke-width="1.3" fill="none" stroke-linejoin="round"/></svg>
<svg class="r" style="left:260px;top:154px;" width="34" height="36" viewBox="0 0 34 36"><circle cx="16.8" cy="17.3" r="11.4" fill="#d2e6f8" stroke="#7a7a70" stroke-width="1"/><path d="M16.8,6 L11.8,14 M16.8,6 L21.8,14 M11.8,14 L11.5,21.2 M21.8,14 L22.3,21.2 M11.5,21.2 L16.8,28.7 M22.3,21.2 L16.8,28.7 M11.8,14 L21.8,14 M11.5,21.2 L22.3,21.2 M5.5,17.3 L11.8,14 M5.5,17.3 L11.5,21.2 M28.2,17.3 L21.8,14 M28.2,17.3 L22.3,21.2 " stroke="#6a6a60" stroke-width="0.9" fill="none"/><circle cx="16.8" cy="6" r="2.5" fill="#a5d68c" stroke="#6a6a50" stroke-width="0.8"/><circle cx="16.8" cy="28.7" r="2.5" fill="#a5d68c" stroke="#6a6a50" stroke-width="0.8"/><circle cx="5.5" cy="17.3" r="2.5" fill="#a5d68c" stroke="#6a6a50" stroke-width="0.8"/><circle cx="28.2" cy="17.3" r="2.5" fill="#a5d68c" stroke="#6a6a50" stroke-width="0.8"/><circle cx="11.8" cy="14" r="2.5" fill="#e0f4ea" stroke="#6a6a50" stroke-width="0.8"/><circle cx="21.8" cy="14" r="2.5" fill="#e0f4ea" stroke="#6a6a50" stroke-width="0.8"/><circle cx="11.5" cy="21.2" r="2.5" fill="#a5d68c" stroke="#6a6a50" stroke-width="0.8"/><circle cx="22.3" cy="21.2" r="2.5" fill="#a5d68c" stroke="#6a6a50" stroke-width="0.8"/></svg>
<svg class="r" style="left:300px;top:154px;" width="150" height="36" viewBox="0 0 150 36"><path d="M5,9 C9,6 13,6 17,9.5 C19,10.5 21,10 27,10 M5,13 C9,10 13,10 17,13.5 C19,14.5 21,14 27,14 M5,22.5 C9,26 13,26 17,22 C19,21 21,21.5 27,21.5 M5,26.5 C9,30 13,30 17,26 C19,25 21,25.5 27,25.5" fill="none" stroke="#c4c4c4" stroke-width="1.3"/><circle cx="12.1" cy="18" r="4.8" fill="#d4d4d4" stroke="#b8b8b8"/><path d="M55,18 L67.6,18 L67.6,27.3 L42.2,27.3" fill="#e2e2e2" stroke="#b4b4b4"/><path d="M42.2,18 C50,18 55,14 57.8,8.6 L66.8,12.5 C63,22 53,27.3 42.2,27.3Z" fill="#d4d4d4" stroke="#a8a8a8"/><circle cx="93.75" cy="18" r="10.7" fill="none" stroke="#5a5a5a" stroke-width="1.1"/><circle cx="89.8" cy="13.3" r="2.7" fill="#d8f0ee" stroke="#8a8a8a" stroke-width="0.8"/><circle cx="97.3" cy="19.5" r="4.5" fill="#a5d68c" stroke="#8a9a70" stroke-width="0.8"/><circle cx="89" cy="21.9" r="1.7" fill="#a5d68c" stroke="#8a9a70" stroke-width="0.7"/><circle cx="122.3" cy="6.6" r="3.2" fill="none" stroke="#bdbdbd"/><circle cx="132.8" cy="18" r="10.8" fill="none" stroke="#b0b0b0"/><circle cx="136.7" cy="19.1" r="4.6" fill="#d2d2d2" stroke="#bdbdbd"/><circle cx="128.1" cy="21.5" r="2" fill="#e0e0e0" stroke="#bdbdbd"/></svg>
<svg class="r" style="left:462px;top:164px;" width="6" height="19.0" viewBox="0 0 6 19.0"><rect x="0.0" y="0.0" width="1.4" height="1.4" fill="#b8b8b8"/><rect x="3.3" y="0.0" width="1.4" height="1.4" fill="#b8b8b8"/><rect x="0.0" y="3.6" width="1.4" height="1.4" fill="#b8b8b8"/><rect x="3.3" y="3.6" width="1.4" height="1.4" fill="#b8b8b8"/><rect x="0.0" y="7.2" width="1.4" height="1.4" fill="#b8b8b8"/><rect x="3.3" y="7.2" width="1.4" height="1.4" fill="#b8b8b8"/><rect x="0.0" y="10.8" width="1.4" height="1.4" fill="#b8b8b8"/><rect x="3.3" y="10.8" width="1.4" height="1.4" fill="#b8b8b8"/><rect x="0.0" y="14.4" width="1.4" height="1.4" fill="#b8b8b8"/><rect x="3.3" y="14.4" width="1.4" height="1.4" fill="#b8b8b8"/></svg>
<svg class="r" style="left:477px;top:159px;" width="26" height="27" viewBox="0 0 26 27"><path d="M1,1 L19,1 L19,12 L12,12 L12,19 L1,19Z" fill="#d4e6f6" stroke="#555" stroke-width="1.3"/><rect x="14" y="14" width="10" height="10" fill="#a5d68c" stroke="#666" stroke-width="1" stroke-dasharray="2,1.5"/></svg>
<svg class="r" style="left:516px;top:158px;" width="26" height="28" viewBox="0 0 26 28"><circle cx="5.5" cy="6" r="5" fill="#fff" stroke="#555" stroke-width="1"/><path d="M5.5,3v3.5h3" fill="none" stroke="#2a7ac0" stroke-width="1.2"/><path d="M1.5,16 L1.5,24 L25,24" fill="none" stroke="#666" stroke-width="1.2"/><path d="M3,22 L5,17 L7,21 L9,16 L11,22 L13,17 L15,21 L17,16 L19,22 L21,18 L24,20" fill="none" stroke="#2a7ac0" stroke-width="1.3"/><rect x="14" y="1" width="10" height="10" fill="none" stroke="#777" stroke-dasharray="2,1.5"/><path d="M19,3 L23,9 L15,9Z" fill="#a5d68c"/></svg>
<svg class="r" style="left:555px;top:158px;" width="27" height="28" viewBox="0 0 27 28"><path d="M2,3 L20,1 L25,10 L22,27 L4,24Z" fill="#8cc878" stroke="#5a8a4a"/><path d="M5,24 L24,5" stroke="#2a7ac0" stroke-width="1.4"/><path d="M7,18 L9,14 L11,17 L13,12 L15,15 L17,10 L19,13 L21,8" fill="none" stroke="#2a5aa0" stroke-width="1.3"/><circle cx="5" cy="24" r="1.6" fill="#2a7ac0"/><circle cx="24" cy="5" r="1.6" fill="#2a7ac0"/></svg>
<svg class="r" style="left:594px;top:158px;" width="26" height="28" viewBox="0 0 26 28"><circle cx="5.5" cy="6" r="5" fill="#fff" stroke="#555" stroke-width="1"/><path d="M5.5,3v3.5h3" fill="none" stroke="#2a7ac0" stroke-width="1.2"/><path d="M1.5,16 L1.5,24 L25,24" fill="none" stroke="#666" stroke-width="1.2"/><path d="M3,22 L5,17 L7,21 L9,16 L11,22 L13,17 L15,21 L17,16 L19,22 L21,18 L24,20" fill="none" stroke="#2a7ac0" stroke-width="1.3"/><circle cx="19" cy="6" r="5" fill="#f5c518" stroke="#777" stroke-width="0.8"/><rect x="16.5" y="3.5" width="5" height="5" fill="#d8a040" stroke="#777" stroke-width="0.5"/></svg>
<svg class="r" style="left:632px;top:158px;" width="28" height="29" viewBox="0 0 28 29"><path d="M4,5 L14,1 L26,4 L26,22 L15,28 L3,24Z" fill="#d4e4f4" stroke="#b8cce0" stroke-width="1.2"/><path d="M14,6 L14,22 M7,10 L21,19 M21,10 L7,19" stroke="#555" stroke-width="1.1"/></svg>
<svg class="r" style="left:674px;top:164px;" width="6" height="19.0" viewBox="0 0 6 19.0"><rect x="0.0" y="0.0" width="1.4" height="1.4" fill="#b8b8b8"/><rect x="3.3" y="0.0" width="1.4" height="1.4" fill="#b8b8b8"/><rect x="0.0" y="3.6" width="1.4" height="1.4" fill="#b8b8b8"/><rect x="3.3" y="3.6" width="1.4" height="1.4" fill="#b8b8b8"/><rect x="0.0" y="7.2" width="1.4" height="1.4" fill="#b8b8b8"/><rect x="3.3" y="7.2" width="1.4" height="1.4" fill="#b8b8b8"/><rect x="0.0" y="10.8" width="1.4" height="1.4" fill="#b8b8b8"/><rect x="3.3" y="10.8" width="1.4" height="1.4" fill="#b8b8b8"/><rect x="0.0" y="14.4" width="1.4" height="1.4" fill="#b8b8b8"/><rect x="3.3" y="14.4" width="1.4" height="1.4" fill="#b8b8b8"/></svg>
<svg class="r" style="left:689px;top:158px;" width="28" height="28" viewBox="0 0 28 28"><path d="M1,21 L20,2 L27,9 L8,27Z" fill="#f5c518" stroke="#8a7a30" stroke-width="1"/><path d="M5,17 L7,19" stroke="#8a7a30" stroke-width="1"/><path d="M8,14 L10,16" stroke="#8a7a30" stroke-width="1"/><path d="M11,11 L13,13" stroke="#8a7a30" stroke-width="1"/><path d="M14,8 L16,10" stroke="#8a7a30" stroke-width="1"/><path d="M17,5 L19,7" stroke="#8a7a30" stroke-width="1"/></svg>
<div class="r" style="left:693px;top:80px;width:1px;height:0px;background:#cfcfcf"></div>
<svg class="r" style="left:509px;top:229px;" width="19" height="19" viewBox="0 0 19 19"><rect x="3" y="1" width="6" height="2.5" rx="1" fill="#c8c8c8" stroke="#8a8a8a" stroke-width="0.5"/><rect x="0.5" y="2.5" width="15" height="11" rx="2" fill="#c8c8c8" stroke="#8a8a8a"/><circle cx="8" cy="8" r="3.8" fill="#cfe6f6" stroke="#666" stroke-width="1"/><path d="M2,17 C3,12 9,11 12,14 C13,16 11,18 9,18" fill="none" stroke="#e02020" stroke-width="2"/><path d="M0,14 L5,13 L3,18Z" fill="#e02020"/><circle cx="2" cy="3" r="1" fill="#e02020"/></svg>
<svg class="r" style="left:535px;top:229px;" width="19" height="19" viewBox="0 0 19 19"><rect x="3" y="1" width="6" height="2.5" rx="1" fill="#d8d8d8" stroke="#b8b8b8" stroke-width="0.5"/><rect x="0.5" y="2.5" width="15" height="11" rx="2" fill="#d8d8d8" stroke="#b8b8b8"/><circle cx="8" cy="8" r="3.8" fill="#cfe6f6" stroke="#666" stroke-width="1"/><path d="M4,17 C3,12 9,11 12,14 C13,16 11,18 9,18" fill="none" stroke="#bbb" stroke-width="2"/></svg>
<div class="r" style="left:559px;top:231px;width:1px;height:16px;background:#cfcfcf"></div>
<svg class="r" style="left:566px;top:229px;" width="20" height="19" viewBox="0 0 20 19"><path d="M1,5V1H5M15,1H19V5M19,14V18H15M5,18H1V14" fill="none" stroke="#999" stroke-width="1"/><rect x="3" y="4" width="14" height="11" rx="2" fill="#c8c8c8" stroke="#8a8a8a"/><circle cx="10" cy="9.5" r="3.5" fill="#cfe6f6" stroke="#666"/></svg>
<div class="r" style="left:592px;top:231px;width:1px;height:16px;background:#cfcfcf"></div>
<div class="t" style="left:602.5px;top:233.19px;font-size:11px;color:#6a6a4e;font-weight:bold;">3D</div>
<svg class="r" style="left:626px;top:229px;" width="19" height="19" viewBox="0 0 19 19"><rect x="3" y="1" width="6" height="2.5" rx="1" fill="#c8c8c8" stroke="#8a8a8a" stroke-width="0.5"/><rect x="0.5" y="2.5" width="15" height="11" rx="2" fill="#c8c8c8" stroke="#8a8a8a"/><circle cx="8" cy="8" r="3.8" fill="#cfe6f6" stroke="#666" stroke-width="1"/><path d="M9,9 L16,17" stroke="#d8a020" stroke-width="3"/></svg>
<div class="r" style="left:651px;top:231px;width:1px;height:16px;background:#cfcfcf"></div>
<svg class="r" style="left:660px;top:229px;" width="19" height="19" viewBox="0 0 19 19"><rect x="0.5" y="1.5" width="15.5" height="15.5" fill="none" stroke="#7a7a7a" stroke-width="0.9" stroke-dasharray="2,1.6"/><path d="M8.2,5v8.5M4,9.25h8.5" stroke="#8cc870" stroke-width="3"/></svg>
<svg class="r" style="left:686px;top:229px;" width="19" height="19" viewBox="0 0 19 19"><rect x="0.5" y="1.5" width="15.5" height="15.5" fill="none" stroke="#7a7a7a" stroke-width="0.9" stroke-dasharray="2,1.6"/><path d="M4,9.25h8.5" stroke="#e02020" stroke-width="3"/></svg>
<svg class="r" style="left:712px;top:229px;" width="19" height="19" viewBox="0 0 19 19"><rect x="0.5" y="1.5" width="15.5" height="15.5" fill="none" stroke="#7a7a7a" stroke-width="0.9" stroke-dasharray="2,1.6"/><path d="M6,3.5v5M3.5,6h5" stroke="#8cc870" stroke-width="2.2"/><path d="M3,12h7" stroke="#e02020" stroke-width="2.2"/><path d="M11,11 l5.5,1.8 l-2,1 l2.6,2.6 l-1.2,1.2 l-2.6,-2.6 l-1,2Z" fill="#5a5a5a"/></svg>
<div class="r" style="left:737px;top:231px;width:1px;height:16px;background:#cfcfcf"></div>
<svg class="r" style="left:745px;top:229px;" width="19" height="19" viewBox="0 0 19 19"><rect x="0.5" y="1.5" width="15.5" height="15.5" fill="none" stroke="#7a7a7a" stroke-width="0.9" stroke-dasharray="2,1.6"/><path d="M7.5,4.5 L13,14 L2,14Z" fill="#a5d68c" stroke="#6a9a50" stroke-width="0.6"/><path d="M11,12 l5.5,1.8 l-2,1 l2.6,2.6 l-1.2,1.2 l-2.6,-2.6 l-1,2Z" fill="#5a5a5a"/></svg>
<svg class="r" style="left:771px;top:229px;" width="19" height="19" viewBox="0 0 19 19"><rect x="0.5" y="1.5" width="15.5" height="15.5" fill="none" stroke="#7a7a7a" stroke-width="0.9" stroke-dasharray="2,1.6"/><path d="M7.5,4.5 L13,13.5 L2,13.5Z" fill="none" stroke="#b0b0b0" stroke-width="0.7"/><circle cx="7.5" cy="4.5" r="1.6" fill="#c83a20"/><circle cx="2.5" cy="13.5" r="1.6" fill="#c83a20"/><path d="M11,12 l5.5,1.8 l-2,1 l2.6,2.6 l-1.2,1.2 l-2.6,-2.6 l-1,2Z" fill="#5a5a5a"/></svg>
<svg class="r" style="left:797px;top:229px;" width="19" height="19" viewBox="0 0 19 19"><path d="M2,7 L7,3 L15,4 L15,10 L11,14 L2,13Z" fill="#a5d68c" stroke="#6a9a50" stroke-width="0.7"/><path d="M2,7 L11,8 L15,4 M11,8 L11,14" fill="none" stroke="#6a9a50" stroke-width="0.7"/><path d="M10,13 l5.5,1.8 l-2,1 l2.6,2.6 l-1.2,1.2 l-2.6,-2.6 l-1,2Z" fill="#5a5a5a"/></svg>
<svg class="r" style="left:797px;top:229px;" width="19" height="19" viewBox="0 0 19 19"><path d="M0.5,10V1.5H5" fill="none" stroke="#aaa" stroke-width="0.8" stroke-dasharray="1.5,1.5"/></svg>
<svg class="r" style="left:823px;top:229px;" width="19" height="19" viewBox="0 0 19 19"><path d="M2,5 L12,3 L16,6 L16,13 L6,15 L2,12Z" fill="none" stroke="#c8c8c8" stroke-width="0.7" stroke-dasharray="1.5,1.5"/><circle cx="3" cy="6" r="1.2" fill="#d83a30"/><circle cx="10" cy="3.5" r="1.2" fill="#d83a30"/><circle cx="15.5" cy="5.5" r="1.2" fill="#d83a30"/><circle cx="3" cy="11" r="1.2" fill="#d83a30"/><circle cx="15.5" cy="12" r="1.2" fill="#d83a30"/><circle cx="7" cy="8" r="1.2" fill="#d83a30"/><path d="M10,13 l5.5,1.8 l-2,1 l2.6,2.6 l-1.2,1.2 l-2.6,-2.6 l-1,2Z" fill="#5a5a5a"/></svg>
<svg class="r" style="left:848px;top:229px;" width="19" height="19" viewBox="0 0 19 19"><path d="M1,3 L15,2 L17,12 L10,17 L1,13Z" fill="none" stroke="#999" stroke-width="0.8" stroke-dasharray="1.8,1.6"/><path d="M11,6 L11,14 L4,10Z" fill="#a5d68c" stroke="#6a9a50" stroke-width="0.6"/></svg>
<svg class="r" style="left:874px;top:229px;" width="19" height="19" viewBox="0 0 19 19"><path d="M1,3 L15,2 L17,12 L10,17 L1,13Z" fill="none" stroke="#aaa" stroke-width="0.8" stroke-dasharray="1.8,1.6"/><circle cx="4" cy="5" r="1.5" fill="#c83a20"/><circle cx="9" cy="7" r="1.5" fill="#c83a20"/><circle cx="13" cy="5" r="1.5" fill="#c83a20"/><circle cx="4" cy="10" r="1.5" fill="#c83a20"/><circle cx="9" cy="11" r="1.5" fill="#c83a20"/><circle cx="13" cy="13" r="1.5" fill="#c83a20"/></svg>
<svg class="r" style="left:901px;top:229px;" width="19" height="19" viewBox="0 0 19 19"><rect x="0.5" y="1.5" width="15.5" height="15.5" fill="none" stroke="#7a7a7a" stroke-width="0.9" stroke-dasharray="2,1.6"/><circle cx="5" cy="6" r="2.4" fill="#2a8ad6"/><circle cx="5" cy="12.5" r="2.4" fill="#2a8ad6"/><circle cx="11" cy="10.5" r="3" fill="#a5d68c" stroke="#5a8a4a" stroke-width="0.6"/><path d="M12,12 l5.5,1.8 l-2,1 l2.6,2.6 l-1.2,1.2 l-2.6,-2.6 l-1,2Z" fill="#5a5a5a"/></svg>
<svg class="r" style="left:931px;top:229px;" width="18" height="19" viewBox="0 0 18 19"><circle cx="5" cy="8" r="2.8" fill="#ddd" stroke="#bbb"/><path d="M9,12 l5.5,1.8 l-2,1 l2.6,2.6 l-1.2,1.2 l-2.6,-2.6 l-1,2Z" fill="#9a9a9a"/></svg>
<svg class="r" style="left:953px;top:229px;" width="18" height="19" viewBox="0 0 18 19"><path d="M2,5 L7,2 L15,3 L15,13 L10,17 L2,15Z" fill="#d8d8d8" stroke="#aaa"/><path d="M2,5 L10,6 L15,3 M10,6 L10,17" fill="none" stroke="#aaa" stroke-width="0.7"/><path d="M11,11 l5.5,1.8 l-2,1 l2.6,2.6 l-1.2,1.2 l-2.6,-2.6 l-1,2Z" fill="#8a8a8a"/></svg>
<svg class="r" style="left:981px;top:229px;" width="16" height="19" viewBox="0 0 16 19"><path d="M6.5,4.5 L12,14 L1,14Z" fill="#a5d68c" stroke="#6a9a50" stroke-width="0.6"/><path d="M9,11 l5.5,1.8 l-2,1 l2.6,2.6 l-1.2,1.2 l-2.6,-2.6 l-1,2Z" fill="#5a5a5a"/></svg>
<svg class="r" style="left:1007px;top:229px;" width="16" height="19" viewBox="0 0 16 19"><path d="M6.5,4.5 L12,13.5 L1,13.5Z" fill="none" stroke="#aaa" stroke-width="0.7"/><circle cx="6.5" cy="4.5" r="1.5" fill="#c83a20"/><circle cx="1.5" cy="13.5" r="1.5" fill="#c83a20"/><path d="M9,11 l5.5,1.8 l-2,1 l2.6,2.6 l-1.2,1.2 l-2.6,-2.6 l-1,2Z" fill="#5a5a5a"/></svg>
<div class="r" style="left:1027px;top:226px;width:25px;height:25px;background:#dadada;border:1px solid #b5b5b5;border-radius:4px"></div>
<svg class="r" style="left:1030px;top:229px;" width="20" height="19" viewBox="0 0 20 19"><circle cx="5" cy="14" r="2.6" fill="#e02020"/><text x="8" y="14" font-size="16" font-family="Liberation Sans" fill="#555">?</text></svg>
<svg class="r" style="left:1056px;top:229px;" width="18" height="19" viewBox="0 0 18 19"><path d="M5,7 L10,15 L0,15Z" fill="#a5d68c" stroke="#6a9a50" stroke-width="0.6"/><text x="8" y="12" font-size="14" font-family="Liberation Sans" fill="#555">?</text></svg>
<svg class="r" style="left:1083px;top:229px;" width="16" height="19" viewBox="0 0 16 19"><path d="M8,2v15M1,9.5h15" stroke="#2a8ad6" stroke-width="4.4"/></svg>
<svg class="r" style="left:1109px;top:229px;" width="16" height="19" viewBox="0 0 16 19"><path d="M1,9.5h15" stroke="#c2c2c2" stroke-width="4.4"/></svg>
<svg class="r" style="left:1136px;top:229px;" width="15" height="21" viewBox="0 0 15 21"><rect x="1" y="3" width="13" height="4" rx="2" fill="#999" stroke="#666" stroke-width="0.6"/><path d="M2,7 L13,7 L12,19 L3,19Z" fill="#999" stroke="#666" stroke-width="0.6"/><path d="M5,8v10M7.5,8v10M10,8v10" stroke="#666" stroke-width="0.7"/></svg>
<div class="t" style="left:13px;top:199.55px;font-size:12.7px;color:#000;">Properties</div>
<svg class="r" style="left:467px;top:199px;" width="12" height="12" viewBox="0 0 12 12"><rect x="0.5" y="0.5" width="11" height="11" rx="2" fill="none" stroke="#777"/><rect x="3.5" y="2.5" width="5" height="4" fill="none" stroke="#555"/><rect x="2.5" y="5.5" width="5" height="4" fill="#efefef" stroke="#555"/></svg>
<svg class="r" style="left:482px;top:199px;" width="12" height="12" viewBox="0 0 12 12"><rect x="0.5" y="0.5" width="11" height="11" rx="2" fill="none" stroke="#777"/><path d="M3,3L9,9M9,3L3,9" stroke="#333" stroke-width="2"/></svg>
<div class="btn" style="left:20px;top:225px;width:115px;height:27px;"></div>
<div class="btn" style="left:137px;top:225px;width:114px;height:27px;"></div>
<div class="btn" style="left:253px;top:225px;width:115px;height:27px;"></div>
<div class="btn" style="left:370px;top:225px;width:114px;height:27px;"></div>
<svg class="r" style="left:53px;top:228px;" width="16" height="18" viewBox="0 0 16 18"><path d="M1,7 L7,5 L9,7 L9,16 L3,17 L1,15Z" fill="#c8c8c8" stroke="#aaa"/><path d="M7,8 L13,2" stroke="#b5b5b5" stroke-width="2.5"/><path d="M10,1 L15,1 L15,6Z" fill="#b5b5b5"/></svg>
<div class="t" style="left:72px;top:234.20px;font-size:12.4px;color:#a0a0a0;">Apply</div>
<svg class="r" style="left:167px;top:228px;" width="19" height="19" viewBox="0 0 19 19"><circle cx="9.5" cy="9.5" r="7.5" fill="none" stroke="#a8a8a8" stroke-width="2.6"/><path d="M5,14L14,5" stroke="#a8a8a8" stroke-width="2.6"/></svg>
<div class="t" style="left:188px;top:234.29px;font-size:12.3px;color:#a0a0a0;">Reset</div>
<svg class="r" style="left:283px;top:229px;" width="16" height="16" viewBox="0 0 16 16"><path d="M2,2L14,14M14,2L2,14" stroke="#e0101c" stroke-width="4"/></svg>
<div class="t" style="left:302px;top:234.20px;font-size:12.4px;color:#000;">Delete</div>
<div class="t" style="left:420.5px;top:227.03px;font-size:23px;color:#7cbd52;-webkit-text-stroke:0.4px #6a9a48">?</div>
<div class="inp" style="left:20px;top:259px;width:434px;height:26px;"></div>
<div class="t" style="left:23px;top:266.02px;font-size:12.97px;color:#6e6e6e;">Search ... (use Esc to clear text)</div>
<div class="btn" style="left:456px;top:259px;width:28px;height:26px;"></div>
<svg class="r" style="left:461px;top:264px;" width="18" height="18" viewBox="0 0 18 18"><g fill="#b0b0b0"><circle cx="9" cy="9" r="5.5"/><rect x="7.5" y="0.5" width="3" height="17" rx="1"/><rect x="0.5" y="7.5" width="17" height="3" rx="1"/><rect x="7.5" y="0.5" width="3" height="17" rx="1" transform="rotate(45 9 9)"/><rect x="7.5" y="0.5" width="3" height="17" rx="1" transform="rotate(-45 9 9)"/></g><circle cx="9" cy="9" r="2.6" fill="#eee"/></svg>
<div class="r" style="left:20px;top:293px;width:299px;height:27px;border:1px solid #b6b6b6;background:linear-gradient(#f2f2f2,#e6e6e6)"></div>
<div class="r" style="left:33px;top:305px;width:14px;height:3px;background:#3c98d0"></div>
<div class="t" style="left:55px;top:299.71px;font-size:14.05px;color:#000;font-weight:bold;">Properties (nektar_3d_convection.vtu</div>
<div class="btn" style="left:323px;top:293px;width:33px;height:27px;"></div>
<div class="btn" style="left:360px;top:293px;width:33px;height:27px;"></div>
<div class="btn" style="left:397px;top:293px;width:33px;height:27px;"></div>
<div class="btn" style="left:434px;top:293px;width:33px;height:27px;"></div>
<svg class="r" style="left:330px;top:298px;" width="19" height="17" viewBox="0 0 19 17"><rect x="6.5" y="1.5" width="10" height="12" fill="#eee" stroke="#777"/><rect x="2.5" y="4.5" width="10" height="12" fill="#e8e8e8" stroke="#777"/><path d="M4.5,8.5h6M4.5,10.5h6M4.5,12.5h6" stroke="#777"/></svg>
<svg class="r" style="left:367px;top:298px;" width="19" height="17" viewBox="0 0 19 17"><rect x="3.5" y="3.5" width="12" height="13" fill="#ddd" stroke="#aaa"/><rect x="6.5" y="1.5" width="6" height="3" fill="#ccc" stroke="#aaa"/><path d="M5.5,8.5h7M5.5,10.5h7M5.5,12.5h7" stroke="#bbb"/></svg>
<svg class="r" style="left:403px;top:297px;" width="20" height="19" viewBox="0 0 20 19"><path d="M3.5,8 A6.5,6.5 0 0 1 15,5" fill="none" stroke="#2a87c8" stroke-width="2.8"/><path d="M12,1 L18,3 L15,8Z" fill="#2a87c8"/><path d="M16.5,11 A6.5,6.5 0 0 1 5,14" fill="none" stroke="#2a87c8" stroke-width="2.8"/><path d="M8,18 L2,16 L5,11Z" fill="#2a87c8"/></svg>
<svg class="r" style="left:442px;top:297px;" width="17" height="18" viewBox="0 0 17 18"><rect x="0.5" y="0.5" width="16" height="17" fill="#2b5fae" stroke="#1c3f7e"/><rect x="3" y="1" width="11" height="6" fill="#d8e4f4"/><rect x="4" y="11" width="9" height="6" fill="#1a1a1a"/><rect x="9" y="12" width="3" height="4" fill="#ccc"/></svg>
<div class="r" style="left:468px;top:293px;width:16px;height:711px;background:linear-gradient(90deg,#fdfdfd,#f0f0f0)"></div>
<div class="r" style="left:468px;top:309px;width:16px;height:1px;background:#b4b4b4"></div>
<div class="r" style="left:468px;top:837px;width:16px;height:151px;background:#e5e5e5;border-top:1px solid #b4b4b4;border-bottom:1px solid #b4b4b4"></div>
<div class="r" style="left:467px;top:293px;width:1px;height:711px;background:#acacac"></div>
<svg class="r" style="left:470px;top:297px;" width="12" height="7" viewBox="0 0 12 7"><path d="M1,6L5.5,1L10,6Z" fill="#555"/></svg>
<svg class="r" style="left:470px;top:992px;" width="12" height="8" viewBox="0 0 12 8"><path d="M1,1L10,1L5.5,6Z" fill="#555"/></svg>
<div class="r" style="left:20px;top:327px;width:447px;height:158px;border:1px solid #a9a9a9;background:#fff"></div>
<div class="r" style="left:21px;top:328px;width:445px;height:24px;background:linear-gradient(#fbfbfb,#e9e9e9);border-bottom:1px solid #c2c2c2"></div>
<div class="cb" style="left:24px;top:332px"></div>
<svg class="r" style="left:26px;top:334px;" width="13" height="13" viewBox="0 0 13 13"><path d="M2,6.5L5,11L11,1.5" fill="none" stroke="#000" stroke-width="2"/></svg>
<div class="t" style="left:46px;top:333.84px;font-size:14.6px;color:#000;">Cell/Point Array Status</div>
<svg class="r" style="left:447px;top:331px;" width="18" height="18" viewBox="0 0 18 18"><circle cx="9" cy="9" r="7.5" fill="#fff" stroke="#3a8fb7" stroke-width="1.8"/><path d="M5,7L13,7L9,12Z" fill="#3a8fb7"/></svg>
<div class="cb" style="left:24px;top:355px"></div>
<svg class="r" style="left:26px;top:357px;" width="13" height="13" viewBox="0 0 13 13"><path d="M2,6.5L5,11L11,1.5" fill="none" stroke="#000" stroke-width="2"/></svg>
<svg class="r" style="left:48px;top:355px;" width="18" height="18" viewBox="0 0 18 18"><g fill="#f7c124" stroke="#c99a1c" stroke-width="0.6"><circle cx="3.7" cy="2.6" r="2.3"/><circle cx="12.5" cy="3.9" r="2.3"/><circle cx="5" cy="11.7" r="2.3"/><circle cx="14.2" cy="13.1" r="2.3"/></g></svg>
<div class="t" style="left:73.5px;top:356.64px;font-size:14.6px;color:#000;">T</div>
<div class="cb" style="left:24px;top:377px"></div>
<svg class="r" style="left:26px;top:379px;" width="13" height="13" viewBox="0 0 13 13"><path d="M2,6.5L5,11L11,1.5" fill="none" stroke="#000" stroke-width="2"/></svg>
<svg class="r" style="left:48px;top:377px;" width="18" height="18" viewBox="0 0 18 18"><g fill="#f7c124" stroke="#c99a1c" stroke-width="0.6"><circle cx="3.7" cy="2.6" r="2.3"/><circle cx="12.5" cy="3.9" r="2.3"/><circle cx="5" cy="11.7" r="2.3"/><circle cx="14.2" cy="13.1" r="2.3"/></g></svg>
<div class="t" style="left:73.5px;top:378.64px;font-size:14.6px;color:#000;">p</div>
<div class="cb" style="left:24px;top:399px"></div>
<svg class="r" style="left:26px;top:401px;" width="13" height="13" viewBox="0 0 13 13"><path d="M2,6.5L5,11L11,1.5" fill="none" stroke="#000" stroke-width="2"/></svg>
<svg class="r" style="left:48px;top:399px;" width="18" height="18" viewBox="0 0 18 18"><g fill="#f7c124" stroke="#c99a1c" stroke-width="0.6"><circle cx="3.7" cy="2.6" r="2.3"/><circle cx="12.5" cy="3.9" r="2.3"/><circle cx="5" cy="11.7" r="2.3"/><circle cx="14.2" cy="13.1" r="2.3"/></g></svg>
<div class="t" style="left:73.5px;top:400.64px;font-size:14.6px;color:#000;">u</div>
<div class="cb" style="left:24px;top:421px"></div>
<svg class="r" style="left:26px;top:423px;" width="13" height="13" viewBox="0 0 13 13"><path d="M2,6.5L5,11L11,1.5" fill="none" stroke="#000" stroke-width="2"/></svg>
<svg class="r" style="left:48px;top:421px;" width="18" height="18" viewBox="0 0 18 18"><g fill="#f7c124" stroke="#c99a1c" stroke-width="0.6"><circle cx="3.7" cy="2.6" r="2.3"/><circle cx="12.5" cy="3.9" r="2.3"/><circle cx="5" cy="11.7" r="2.3"/><circle cx="14.2" cy="13.1" r="2.3"/></g></svg>
<div class="t" style="left:73.5px;top:422.64px;font-size:14.6px;color:#000;">v</div>
<div class="cb" style="left:24px;top:443px"></div>
<svg class="r" style="left:26px;top:445px;" width="13" height="13" viewBox="0 0 13 13"><path d="M2,6.5L5,11L11,1.5" fill="none" stroke="#000" stroke-width="2"/></svg>
<svg class="r" style="left:48px;top:443px;" width="18" height="18" viewBox="0 0 18 18"><g fill="#f7c124" stroke="#c99a1c" stroke-width="0.6"><circle cx="3.7" cy="2.6" r="2.3"/><circle cx="12.5" cy="3.9" r="2.3"/><circle cx="5" cy="11.7" r="2.3"/><circle cx="14.2" cy="13.1" r="2.3"/></g></svg>
<div class="t" style="left:73.5px;top:444.64px;font-size:14.6px;color:#000;">w</div>
<div class="r" style="left:20px;top:492px;width:299px;height:27px;border:1px solid #b6b6b6;background:linear-gradient(#f2f2f2,#e6e6e6)"></div>
<div class="r" style="left:33px;top:504px;width:14px;height:3px;background:#3c98d0"></div>
<div class="t" style="left:55px;top:499.09px;font-size:13.6px;color:#000;font-weight:bold;">Display (UnstructuredGridRepresentati</div>
<div class="btn" style="left:323px;top:492px;width:33px;height:27px;"></div>
<div class="btn" style="left:360px;top:492px;width:33px;height:27px;"></div>
<div class="btn" style="left:397px;top:492px;width:33px;height:27px;"></div>
<div class="btn" style="left:434px;top:492px;width:33px;height:27px;"></div>
<svg class="r" style="left:330px;top:497px;" width="19" height="17" viewBox="0 0 19 17"><rect x="6.5" y="1.5" width="10" height="12" fill="#eee" stroke="#777"/><rect x="2.5" y="4.5" width="10" height="12" fill="#e8e8e8" stroke="#777"/><path d="M4.5,8.5h6M4.5,10.5h6M4.5,12.5h6" stroke="#777"/></svg>
<svg class="r" style="left:367px;top:497px;" width="19" height="17" viewBox="0 0 19 17"><rect x="3.5" y="3.5" width="12" height="13" fill="#ddd" stroke="#aaa"/><rect x="6.5" y="1.5" width="6" height="3" fill="#ccc" stroke="#aaa"/><path d="M5.5,8.5h7M5.5,10.5h7M5.5,12.5h7" stroke="#bbb"/></svg>
<svg class="r" style="left:403px;top:496px;" width="20" height="19" viewBox="0 0 20 19"><path d="M3.5,8 A6.5,6.5 0 0 1 15,5" fill="none" stroke="#2a87c8" stroke-width="2.8"/><path d="M12,1 L18,3 L15,8Z" fill="#2a87c8"/><path d="M16.5,11 A6.5,6.5 0 0 1 5,14" fill="none" stroke="#2a87c8" stroke-width="2.8"/><path d="M8,18 L2,16 L5,11Z" fill="#2a87c8"/></svg>
<svg class="r" style="left:442px;top:496px;" width="17" height="18" viewBox="0 0 17 18"><rect x="0.5" y="0.5" width="16" height="17" fill="#2b5fae" stroke="#1c3f7e"/><rect x="3" y="1" width="11" height="6" fill="#d8e4f4"/><rect x="4" y="11" width="9" height="6" fill="#1a1a1a"/><rect x="9" y="12" width="3" height="4" fill="#ccc"/></svg>
<div class="t" style="left:20px;top:528.30px;font-size:12.64px;color:#000;">Representation</div>
<div class="btn" style="left:128px;top:526px;width:339px;height:24px;"></div>
<div class="t" style="left:133.3px;top:532.82px;font-size:12.5px;color:#000;">Surface</div>
<svg class="r" style="left:445px;top:534px;" width="12" height="7" viewBox="0 0 12 7"><path d="M0,0L11,0L5.5,6.5Z" fill="#444"/></svg>
<div class="t" style="left:20px;top:560.72px;font-size:12.5px;color:#000;font-weight:bold;">Coloring</div>
<div class="r" style="left:20px;top:575px;width:447px;height:1px;background:#a8a8a8;box-shadow:0 1px 0 #fafafa"></div>
<div class="btn" style="left:20px;top:581px;width:203px;height:28px;"></div>
<svg class="r" style="left:33px;top:593px;" width="6" height="6" viewBox="0 0 6 6"><circle cx="3" cy="3" r="2.6" fill="#f3b400"/></svg>
<div class="t" style="left:49.5px;top:588.42px;font-size:12.5px;color:#000;">p</div>
<svg class="r" style="left:202px;top:593px;" width="12" height="7" viewBox="0 0 12 7"><path d="M0,0L11,0L5.5,6.5Z" fill="#444"/></svg>
<div class="btn" style="left:227px;top:583px;width:203px;height:24px;border-color:#d0d0d0;background:linear-gradient(#f8f8f8,#f0f0f0)"></div>
<svg class="r" style="left:409px;top:593px;" width="11" height="6" viewBox="0 0 11 6"><path d="M0,0L10,0L5,6Z" fill="#c8c8c8"/></svg>
<div class="btn" style="left:20px;top:613px;width:188px;height:27px;"></div>
<svg class="r" style="left:94px;top:615px;" width="17" height="19" viewBox="0 0 17 19"><circle cx="6" cy="6" r="5" fill="#8fc46a" stroke="#6f9a52"/><rect x="0.5" y="9.5" width="16" height="8" fill="url(#cmap)" stroke="#8a8560"/></svg>
<div class="t" style="left:114.6px;top:621.42px;font-size:12.5px;color:#000;">Edit</div>
<svg width="0" height="0" style="position:absolute"><defs><linearGradient id="cmap" x1="0" x2="1" y1="0" y2="0"><stop offset="0" stop-color="#3b3f9a"/><stop offset="0.3" stop-color="#2aa0d8"/><stop offset="0.6" stop-color="#9fd05a"/><stop offset="1" stop-color="#f2b21e"/></linearGradient><linearGradient id="cmapv" x1="0" x2="0" y1="0" y2="1"><stop offset="0" stop-color="#e8a030"/><stop offset="0.2" stop-color="#e8c838"/><stop offset="0.35" stop-color="#b8d048"/><stop offset="0.5" stop-color="#50b8c8"/><stop offset="0.7" stop-color="#3a8ad0"/><stop offset="0.85" stop-color="#3050b0"/><stop offset="1" stop-color="#5a3a8a"/></linearGradient></defs></svg>
<div class="btn" style="left:212px;top:613px;width:33px;height:27px;"></div>
<div class="btn" style="left:249px;top:613px;width:33px;height:27px;"></div>
<div class="btn" style="left:286px;top:613px;width:33px;height:27px;"></div>
<div class="btn" style="left:323px;top:613px;width:33px;height:27px;"></div>
<div class="btn" style="left:360px;top:613px;width:33px;height:27px;"></div>
<div class="btn" style="left:397px;top:613px;width:33px;height:27px;background:#dcdcdc;border-color:#a0a0a0"></div>
<div class="btn" style="left:434px;top:613px;width:33px;height:27px;"></div>
<svg class="r" style="left:219px;top:617px;" width="19" height="19" viewBox="0 0 19 19"><path d="M3,6 A3.5,3.5 0 1 1 10,5 L8,9" fill="none" stroke="#111" stroke-width="2"/><rect x="4" y="9" width="14" height="8" fill="url(#cmap)" stroke="#8a8560"/><path d="M1,4L3,5M2,1L4,3" stroke="#111"/></svg>
<svg class="r" style="left:256px;top:617px;" width="19" height="19" viewBox="0 0 19 19"><path d="M1,6 L6,1.5 L6,4.5 L12,4.5 L12,1.5 L17,6 L12,10.5 L12,7.5 L6,7.5 L6,10.5Z" fill="#8fcb78" stroke="#6b7a55" stroke-width="0.9"/><path d="M1,14h16M1.5,11v6M7,12v4M12,12v4M16.5,11v6" stroke="#777a60" stroke-width="1"/></svg>
<svg class="r" style="left:293px;top:617px;" width="19" height="19" viewBox="0 0 19 19"><path d="M1,6 L6,1.5 L6,4.5 L12,4.5 L12,1.5 L17,6 L12,10.5 L12,7.5 L6,7.5 L6,10.5Z" fill="#8fcb78" stroke="#6b7a55" stroke-width="0.9"/><path d="M1,14h16M1.5,11v6M7,12v4M12,12v4M16.5,11v6" stroke="#777a60" stroke-width="1"/><text x="11" y="18" font-size="9" font-weight="bold" font-family="Liberation Sans">c</text></svg>
<svg class="r" style="left:330px;top:617px;" width="19" height="19" viewBox="0 0 19 19"><path d="M1,6 L6,1.5 L6,4.5 L12,4.5 L12,1.5 L17,6 L12,10.5 L12,7.5 L6,7.5 L6,10.5Z" fill="#8fcb78" stroke="#6b7a55" stroke-width="0.9"/><path d="M1,14h16M1.5,11v6M7,12v4M12,12v4M16.5,11v6" stroke="#777a60" stroke-width="1"/><text x="12" y="18" font-size="9" font-weight="bold" font-family="Liberation Sans" fill="#333">t</text></svg>
<svg class="r" style="left:366px;top:617px;" width="21" height="19" viewBox="0 0 21 19"><path d="M1,4 L7,4 L9,2 L19,2 L19,15 L1,15Z" fill="#f3d36a" stroke="#9a8a50"/><path d="M10,18 L4,12 C2,9 5,6 8,8 L10,10 L12,8 C15,6 18,9 16,12Z" fill="#e83030" stroke="#b01818" stroke-width="0.6"/></svg>
<svg class="r" style="left:406px;top:617px;" width="14" height="19" viewBox="0 0 14 19"><rect x="1" y="1" width="11" height="17" fill="url(#cmapv)" stroke="#8a8560"/></svg>
<svg class="r" style="left:439px;top:616px;" width="24" height="21" viewBox="0 0 24 21"><rect x="1" y="1" width="10" height="18" fill="url(#cmapv)"/><text x="7" y="19" font-size="19" font-weight="bold" font-style="italic" font-family="Liberation Serif" fill="#111">e</text></svg>
<div class="t" style="left:20px;top:649.60px;font-size:13.0px;color:#000;font-weight:bold;">Styling</div>
<div class="r" style="left:20px;top:664px;width:447px;height:1px;background:#a8a8a8;box-shadow:0 1px 0 #fafafa"></div>
<div class="t" style="left:20px;top:673.59px;font-size:12.3px;color:#000;">Opacity</div>
<div class="r" style="left:129px;top:681px;width:164px;height:6px;background:#3a8ee0;border:1px solid #2c6fb0;border-radius:3px"></div>
<div class="btn" style="left:277px;top:675px;width:16px;height:16px;border-radius:3px"></div>
<div class="inp" style="left:301px;top:672px;width:166px;height:25px;"></div>
<div class="t" style="left:304.7px;top:678.17px;font-size:12.5px;color:#000;">1</div>
<div class="t" style="left:20px;top:707.20px;font-size:13.0px;color:#000;font-weight:bold;">Lighting</div>
<div class="r" style="left:20px;top:722px;width:447px;height:1px;background:#a8a8a8;box-shadow:0 1px 0 #fafafa"></div>
<div class="t" style="left:20px;top:730.38px;font-size:12.54px;color:#000;">Specular</div>
<div class="r" style="left:129px;top:738px;width:164px;height:6px;background:#e0e0e0;border:1px solid #b8b8b8;border-radius:3px"></div>
<div class="btn" style="left:129px;top:732px;width:16px;height:16px;border-radius:3px"></div>
<div class="inp" style="left:301px;top:729px;width:166px;height:25px;"></div>
<div class="t" style="left:304.7px;top:735.02px;font-size:12.5px;color:#000;">0</div>
<div class="cb" style="left:20px;top:761px"></div>
<div class="t" style="left:43.2px;top:763.77px;font-size:12.32px;color:#000;">Seamless U</div>
<div class="cb" style="left:20px;top:787px"></div>
<div class="t" style="left:43.2px;top:789.87px;font-size:12.32px;color:#000;">Seamless V</div>
<div class="t" style="left:20px;top:815.54px;font-size:13.3px;color:#000;font-weight:bold;">Ray Tracing</div>
<div class="r" style="left:20px;top:830px;width:447px;height:1px;background:#a8a8a8;box-shadow:0 1px 0 #fafafa"></div>
<div class="cb" style="left:20px;top:839px"></div>
<div class="t" style="left:43.2px;top:842.16px;font-size:12.69px;color:#000;">Use Scale Array</div>
<div class="r" style="left:20px;top:863px;width:447px;height:1px;background:#a8a8a8;box-shadow:0 1px 0 #fafafa"></div>
<div class="cb" style="left:20px;top:877px"></div>
<div class="t" style="left:43.2px;top:880.15px;font-size:12.46px;color:#000;">Data Axes Grid</div>
<div class="btn" style="left:137px;top:875px;width:330px;height:24px;"></div>
<div class="t" style="left:291px;top:881.64px;font-size:12.0px;color:#000;">Edit</div>
<div class="t" style="left:20px;top:905.28px;font-size:12.66px;color:#000;">Maximum Number</div>
<div class="t" style="left:20px;top:921.02px;font-size:12.5px;color:#000;">Of Labels</div>
<div class="inp" style="left:128px;top:906px;width:339px;height:26px;"></div>
<div class="t" style="left:131.5px;top:913.22px;font-size:12.5px;color:#000;">100</div>
<div class="r" style="left:20px;top:942px;width:299px;height:27px;border:1px solid #b6b6b6;background:linear-gradient(#f2f2f2,#e6e6e6)"></div>
<div class="r" style="left:33px;top:954px;width:14px;height:3px;background:#3c98d0"></div>
<div class="t" style="left:55px;top:948.75px;font-size:14.0px;color:#000;font-weight:bold;">View (Render View)</div>
<div class="btn" style="left:323px;top:942px;width:33px;height:27px;"></div>
<div class="btn" style="left:360px;top:942px;width:33px;height:27px;"></div>
<div class="btn" style="left:397px;top:942px;width:33px;height:27px;"></div>
<div class="btn" style="left:434px;top:942px;width:33px;height:27px;"></div>
<svg class="r" style="left:330px;top:947px;" width="19" height="17" viewBox="0 0 19 17"><rect x="6.5" y="1.5" width="10" height="12" fill="#eee" stroke="#777"/><rect x="2.5" y="4.5" width="10" height="12" fill="#e8e8e8" stroke="#777"/><path d="M4.5,8.5h6M4.5,10.5h6M4.5,12.5h6" stroke="#777"/></svg>
<svg class="r" style="left:367px;top:947px;" width="19" height="17" viewBox="0 0 19 17"><rect x="3.5" y="3.5" width="12" height="13" fill="#ddd" stroke="#aaa"/><rect x="6.5" y="1.5" width="6" height="3" fill="#ccc" stroke="#aaa"/><path d="M5.5,8.5h7M5.5,10.5h7M5.5,12.5h7" stroke="#bbb"/></svg>
<svg class="r" style="left:403px;top:946px;" width="20" height="19" viewBox="0 0 20 19"><path d="M3.5,8 A6.5,6.5 0 0 1 15,5" fill="none" stroke="#2a87c8" stroke-width="2.8"/><path d="M12,1 L18,3 L15,8Z" fill="#2a87c8"/><path d="M16.5,11 A6.5,6.5 0 0 1 5,14" fill="none" stroke="#2a87c8" stroke-width="2.8"/><path d="M8,18 L2,16 L5,11Z" fill="#2a87c8"/></svg>
<svg class="r" style="left:442px;top:946px;" width="17" height="18" viewBox="0 0 17 18"><rect x="0.5" y="0.5" width="16" height="17" fill="#2b5fae" stroke="#1c3f7e"/><rect x="3" y="1" width="11" height="6" fill="#d8e4f4"/><rect x="4" y="11" width="9" height="6" fill="#1a1a1a"/><rect x="9" y="12" width="3" height="4" fill="#ccc"/></svg>
<div class="cb" style="left:20px;top:979px"></div>
<div class="t" style="left:43.2px;top:982.22px;font-size:12.5px;color:#000;">Axes Grid</div>
<div class="btn" style="left:107px;top:976px;width:360px;height:25px;"></div>
<div class="t" style="left:276px;top:983.44px;font-size:12.0px;color:#000;">Edit</div>
<svg class="r" style="left:497px;top:597px;" width="4" height="18" viewBox="0 0 4 18"><rect x="1" y="1" width="1.3" height="1.3" fill="#a0a0a0"/><rect x="1" y="4" width="1.3" height="1.3" fill="#a0a0a0"/><rect x="1" y="7" width="1.3" height="1.3" fill="#a0a0a0"/><rect x="1" y="10" width="1.3" height="1.3" fill="#a0a0a0"/><rect x="1" y="13" width="1.3" height="1.3" fill="#a0a0a0"/><rect x="1" y="16" width="1.3" height="1.3" fill="#a0a0a0"/></svg>
<div class="r" style="left:502px;top:224px;width:1418px;height:1px;background:#b9b9b9"></div>
<div class="r" style="left:503px;top:195px;width:122px;height:30px;background:#fbfbfb;border:1px solid #c4c4c4;border-bottom:none;border-radius:3px 3px 0 0"></div>
<div class="r" style="left:625px;top:197px;width:37px;height:27px;background:linear-gradient(#ececec,#e4e4e4);border:1px solid #c4c4c4;border-bottom:none;border-left:none;border-radius:0 3px 0 0"></div>
<svg class="r" style="left:517px;top:203px;" width="16" height="16" viewBox="0 0 16 16"><rect x="1" y="1" width="14" height="14" fill="#fff" stroke="#333" stroke-width="1.6"/><rect x="1" y="1" width="14" height="3" fill="#333"/></svg>
<div class="t" style="left:537px;top:205.83px;font-size:12.6px;color:#000;">Layout #1</div>
<svg class="r" style="left:597px;top:205px;" width="12" height="12" viewBox="0 0 12 12"><rect x="0.5" y="0.5" width="11" height="11" rx="1.5" fill="#fff" stroke="#555"/><path d="M3,3L9,9M9,3L3,9" stroke="#333" stroke-width="1.8"/></svg>
<div class="t" style="left:638px;top:205.15px;font-size:14px;color:#000;">+</div>
<div class="t" style="left:1723px;top:232.49px;font-size:13.6px;color:#000;font-weight:bold;">RenderView1</div>
<div class="r" style="left:1723px;top:243.5px;width:86px;height:1.5px;background:#000"></div>
<div class="btn" style="left:1820px;top:226px;width:26px;height:25px;"></div>
<div class="btn" style="left:1847px;top:226px;width:26px;height:25px;"></div>
<div class="btn" style="left:1874px;top:226px;width:26px;height:25px;"></div>
<div class="btn" style="left:1901px;top:226px;width:26px;height:25px;"></div>
<svg class="r" style="left:1825px;top:231px;" width="16" height="16" viewBox="0 0 16 16"><rect x="2" y="1.5" width="6" height="13" fill="#c8d4ee" stroke="#9aa"/><rect x="8" y="1.5" width="6" height="13" fill="#c8d4ee" stroke="#9aa"/></svg>
<svg class="r" style="left:1852px;top:231px;" width="16" height="16" viewBox="0 0 16 16"><rect x="1.5" y="2" width="13" height="6" fill="#c8d4ee" stroke="#9aa"/><rect x="1.5" y="8" width="13" height="6" fill="#c8d4ee" stroke="#9aa"/></svg>
<svg class="r" style="left:1878px;top:230px;" width="18" height="18" viewBox="0 0 18 18"><rect x="1.5" y="1.5" width="15" height="15" fill="#f4f4f4" stroke="#333" stroke-width="2"/><rect x="1" y="1" width="16" height="4" fill="#333"/></svg>
<svg class="r" style="left:1908px;top:232px;" width="12" height="12" viewBox="0 0 12 12"><rect x="0.5" y="0.5" width="11" height="11" rx="2" fill="#fff" stroke="#777"/><path d="M3,3L9,9M9,3L3,9" stroke="#555" stroke-width="2"/></svg>
<div class="r" style="left:502px;top:224px;width:1px;height:790px;background:#a8a8a8"></div>
<div class="r" style="left:503px;top:251px;width:1417px;height:763px;border:1px solid #fbfbe6;border-right:none"></div>
<div class="r" style="left:504px;top:252px;width:1416px;height:761px;border:2px solid #0000ff;border-right:none"></div>
<div class="r" style="left:506px;top:254px;width:1414px;height:757px;border:1px solid #f6f6e0;border-right:none"></div>
<svg class="r" style="left:0px;top:0px;left:0;top:0;pointer-events:none" width="1920" height="1080" viewBox="0 0 1920 1080"><defs><linearGradient id="gTop" gradientUnits="userSpaceOnUse" x1="1250" y1="400" x2="1439" y2="335"><stop offset="0" stop-color="#c4c6c9"/><stop offset="0.42" stop-color="#b0bcd6"/><stop offset="0.65" stop-color="#94a8dc"/><stop offset="0.83" stop-color="#7088d4"/><stop offset="1" stop-color="#465cc2"/></linearGradient><linearGradient id="gDark" gradientUnits="userSpaceOnUse" x1="1167" y1="771" x2="1356" y2="876"><stop offset="0" stop-color="#4b4f5a"/><stop offset="0.5" stop-color="#3f4660"/><stop offset="1" stop-color="#1c2256"/></linearGradient><linearGradient id="gGray" gradientUnits="userSpaceOnUse" x1="1250" y1="400" x2="1061" y2="465"><stop offset="0" stop-color="#565a63"/><stop offset="0.3" stop-color="#5d5f63"/><stop offset="0.6" stop-color="#636261"/><stop offset="1" stop-color="#666665"/></linearGradient><linearGradient id="gGray2" gradientUnits="userSpaceOnUse" x1="1167" y1="771" x2="1040" y2="700"><stop offset="0" stop-color="#505666" stop-opacity="0.45"/><stop offset="0.5" stop-color="#5a5e66" stop-opacity="0.15"/><stop offset="1" stop-color="#666666" stop-opacity="0"/></linearGradient><radialGradient id="gHot" gradientUnits="userSpaceOnUse" cx="1299" cy="534" r="70"><stop offset="0" stop-color="#b42418"/><stop offset="0.3" stop-color="#d2583c"/><stop offset="0.6" stop-color="#e6a888" stop-opacity="0.8"/><stop offset="1" stop-color="#e8c0a8" stop-opacity="0"/></radialGradient><radialGradient id="gHotL" gradientUnits="userSpaceOnUse" cx="1299" cy="534" r="75"><stop offset="0" stop-color="#6a2a20"/><stop offset="0.35" stop-color="#6a3a30" stop-opacity="0.8"/><stop offset="1" stop-color="#606060" stop-opacity="0"/></radialGradient><radialGradient id="gHotD" gradientUnits="userSpaceOnUse" cx="1299" cy="534" r="45"><stop offset="0" stop-color="#3a2020" stop-opacity="0.9"/><stop offset="1" stop-color="#4b4f5a" stop-opacity="0"/></radialGradient><clipPath id="cTop"><polygon points="1203,255 1377,255 1401,262 1571,585 1299,534"/></clipPath><clipPath id="cGray"><polygon points="1158,255 1203,255 1299,534 1035,1010 1006,1010 978,707"/></clipPath><clipPath id="cDark"><polygon points="1299,534 1571,585 1258,1010 1035,1010"/></clipPath></defs><rect x="507" y="255" width="1413" height="755" fill="#52576e"/><polygon points="1158,255 1203,255 1299,534 1035,1010 1006,1010 978,707" fill="url(#gGray)"/><polygon points="1158,255 1203,255 1299,534 1035,1010 1006,1010 978,707" fill="url(#gGray2)"/><polygon points="1203,255 1377,255 1401,262 1571,585 1299,534" fill="url(#gTop)"/><polygon points="1299,534 1571,585 1258,1010 1035,1010" fill="url(#gDark)"/><linearGradient id="h1" gradientUnits="userSpaceOnUse" x1="1299" y1="534" x2="1308.7" y2="471.1"><stop offset="0" stop-color="#a81c10" stop-opacity="1"/><stop offset="0.28" stop-color="#cc4c2e" stop-opacity="1"/><stop offset="0.58" stop-color="#e28c6a" stop-opacity="0.95"/><stop offset="0.82" stop-color="#e4b8a2" stop-opacity="0.7"/><stop offset="1" stop-color="#d0c8c4" stop-opacity="0"/></linearGradient><g clip-path="url(#cTop)"><polygon points="1296,538 1272,466 1321,473" fill="url(#h1)" shape-rendering="crispEdges"/></g><linearGradient id="h2" gradientUnits="userSpaceOnUse" x1="1299" y1="534" x2="1338.5" y2="519.0"><stop offset="0" stop-color="#a81c10" stop-opacity="1"/><stop offset="0.28" stop-color="#cc4c2e" stop-opacity="1"/><stop offset="0.58" stop-color="#e28c6a" stop-opacity="0.95"/><stop offset="0.82" stop-color="#e4b8a2" stop-opacity="0.7"/><stop offset="1" stop-color="#d0c8c4" stop-opacity="0"/></linearGradient><g clip-path="url(#cTop)"><polygon points="1296,538 1321,473 1349,548" fill="url(#h2)" shape-rendering="crispEdges"/></g><linearGradient id="h3" gradientUnits="userSpaceOnUse" x1="1299" y1="534" x2="1252.2" y2="507.8"><stop offset="0" stop-color="#4a140c" stop-opacity="1"/><stop offset="0.3" stop-color="#5a2418" stop-opacity="0.95"/><stop offset="0.65" stop-color="#6a4a3a" stop-opacity="0.65"/><stop offset="0.88" stop-color="#686058" stop-opacity="0.3"/><stop offset="1" stop-color="#626262" stop-opacity="0"/></linearGradient><g clip-path="url(#cGray)"><polygon points="1302,535 1279,465 1233,542" fill="url(#h3)" shape-rendering="crispEdges"/></g><linearGradient id="h4" gradientUnits="userSpaceOnUse" x1="1299" y1="534" x2="1243.0" y2="562.0"><stop offset="0" stop-color="#4a140c" stop-opacity="1"/><stop offset="0.3" stop-color="#5a2418" stop-opacity="0.95"/><stop offset="0.65" stop-color="#6a4a3a" stop-opacity="0.65"/><stop offset="0.88" stop-color="#686058" stop-opacity="0.3"/><stop offset="1" stop-color="#626262" stop-opacity="0"/></linearGradient><g clip-path="url(#cGray)"><polygon points="1302,535 1233,542 1265,602" fill="url(#h4)" shape-rendering="crispEdges"/></g><linearGradient id="h5" gradientUnits="userSpaceOnUse" x1="1299" y1="534" x2="1271.5" y2="603.7"><stop offset="0" stop-color="#2a1410" stop-opacity="0.95"/><stop offset="0.45" stop-color="#3e2a26" stop-opacity="0.65"/><stop offset="1" stop-color="#4b4f5a" stop-opacity="0"/></linearGradient><g clip-path="url(#cDark)"><polygon points="1297,531 1259,600 1300,615" fill="url(#h5)" shape-rendering="crispEdges"/></g><linearGradient id="h6" gradientUnits="userSpaceOnUse" x1="1299" y1="534" x2="1337.3" y2="559.9"><stop offset="0" stop-color="#2a1410" stop-opacity="0.95"/><stop offset="0.45" stop-color="#3e2a26" stop-opacity="0.65"/><stop offset="1" stop-color="#4b4f5a" stop-opacity="0"/></linearGradient><g clip-path="url(#cDark)"><polygon points="1297,531 1300,615 1349,541" fill="url(#h6)" shape-rendering="crispEdges"/></g><rect x="1296.5" y="531.5" width="5" height="5" fill="#ff00ff"/><rect x="1346.0" y="542.0" width="4" height="4" fill="#ff00ff"/><rect x="1231.5" y="540.5" width="3" height="3" fill="#ff00ff"/><rect x="1319.0" y="471.0" width="4" height="4" fill="#ff00ff"/><rect x="1365.0" y="481.0" width="4" height="4" fill="#ff00ff"/><line x1="602" y1="916" x2="619" y2="884" stroke="#d8d020" stroke-width="1.2"/><polygon points="623,876 614,884 621,887" fill="#f0e020"/><line x1="602" y1="916" x2="563" y2="909" stroke="#20e020" stroke-width="1.5"/><polygon points="551,907 563,904 563,912" fill="#10e010"/><line x1="602" y1="916" x2="611" y2="946" stroke="#e02020" stroke-width="1.5"/><polygon points="613,957 607,947 614,945" fill="#f01010"/><text x="620.5" y="885" font-size="17" fill="#fff" font-family="Liberation Sans" transform="translate(620.5 885) scale(0.85 1) translate(-620.5 -885)">Y</text><text x="563.5" y="909.5" font-size="15" fill="#fff" font-family="Liberation Sans" transform="translate(563.5 909.5) scale(0.9 1) translate(-563.5 -909.5)">Z</text><text x="612.5" y="949" font-size="17" fill="#fff" font-family="Liberation Sans" transform="translate(612.5 949) scale(0.85 1) translate(-612.5 -949)">X</text><defs><linearGradient id="gLeg" x1="0" y1="0" x2="0" y2="1"><stop offset="0" stop-color="#b40426"/><stop offset="0.125" stop-color="#d24b40"/><stop offset="0.25" stop-color="#ee8468"/><stop offset="0.375" stop-color="#f7b89c"/><stop offset="0.5" stop-color="#dddcdc"/><stop offset="0.625" stop-color="#b9d0f9"/><stop offset="0.75" stop-color="#8db0fe"/><stop offset="0.875" stop-color="#6282ea"/><stop offset="1" stop-color="#3b4cc0"/></linearGradient></defs><rect x="1803" y="749" width="16" height="249" fill="url(#gLeg)"/><rect x="1816" y="748.2" width="12" height="1.5" fill="#f2f2f2"/><text x="1833" y="753.3" font-size="15" letter-spacing="0.75" fill="#f2f2f2" font-family="Liberation Sans">0.0e+00</text><rect x="1816" y="789.8" width="12" height="1.5" fill="#f2f2f2"/><text x="1833" y="794.8" font-size="15" letter-spacing="0.75" fill="#f2f2f2" font-family="Liberation Sans">-500</text><rect x="1816" y="831.2" width="12" height="1.5" fill="#f2f2f2"/><text x="1833" y="836.3" font-size="15" letter-spacing="0.75" fill="#f2f2f2" font-family="Liberation Sans">-1000</text><rect x="1816" y="872.8" width="12" height="1.5" fill="#f2f2f2"/><text x="1833" y="877.8" font-size="15" letter-spacing="0.75" fill="#f2f2f2" font-family="Liberation Sans">-1500</text><rect x="1816" y="914.2" width="12" height="1.5" fill="#f2f2f2"/><text x="1833" y="919.3" font-size="15" letter-spacing="0.75" fill="#f2f2f2" font-family="Liberation Sans">-2000</text><rect x="1816" y="955.8" width="12" height="1.5" fill="#f2f2f2"/><text x="1833" y="960.8" font-size="15" letter-spacing="0.75" fill="#f2f2f2" font-family="Liberation Sans">-2500</text><rect x="1816" y="997.2" width="12" height="1.5" fill="#f2f2f2"/><text x="1833" y="1002.3" font-size="15" letter-spacing="0.75" fill="#f2f2f2" font-family="Liberation Sans">-3.0e+03</text><text x="1915" y="877" font-size="16" fill="#f2f2f2" font-family="Liberation Sans" transform="rotate(-90 1915 877)">p</text></svg>
<div class="r" style="left:1303px;top:553px;width:186px;height:166px;background:rgba(0,0,0,0.35);filter:blur(1px)"></div>
<div class="r" style="left:1301px;top:551px;width:186px;height:166px;background:#ffffe1;border:1px solid #000"></div>
<div class="t" style="left:1305.3px;top:557.85px;font-size:14.35px;color:#000;font-weight:bold;">nektar_3d_convection.vtu</div>
<div class="t" style="left:1305.3px;top:578.15px;font-size:14px;color:#000;">Id: 767</div>
<div class="t" style="left:1305.3px;top:598.05px;font-size:14px;color:#000;">Coords: (2, 3, 1)</div>
<div class="t" style="left:1305.3px;top:617.95px;font-size:14px;color:#000;">u: 0</div>
<div class="t" style="left:1305.3px;top:637.85px;font-size:14px;color:#000;">v: 0</div>
<div class="t" style="left:1305.3px;top:657.75px;font-size:14px;color:#000;">w: 0</div>
<div class="t" style="left:1305.3px;top:677.65px;font-size:14px;color:#000;">T: 0</div>
<div class="t" style="left:1305.3px;top:697.55px;font-size:14px;color:#000;">p: 0</div>
<div class="r" style="left:503px;top:1014px;width:1417px;height:16px;background:#efefef"></div>
<div class="btn" style="left:958px;top:1018px;width:20px;height:14px;border-radius:3px"></div>
<svg class="r" style="left:963px;top:1020px;" width="10" height="8" viewBox="0 0 10 8"><path d="M2,1L8,7M8,1L2,7" stroke="#999" stroke-width="2"/></svg>
<div class="inp" style="left:980px;top:1018px;width:940px;height:14px;border-color:#a8a8a8;background:#eeeeee"></div>
<div class="r" style="left:0px;top:1030px;width:1920px;height:50px;background:linear-gradient(90deg,#1c1c1c 0px,#1e1e1e 800px,#2c2222 860px,#382727 950px,#3c2627 1100px,#412426 1200px,#412527 1400px,#3a2728 1500px,#262020 1580px,#2e2324 1650px,#3f2528 1760px,#442628 1850px,#3a2426 1920px)"></div>
<svg class="r" style="left:20px;top:1045px;" width="21" height="21" viewBox="0 0 21 21"><path d="M0,2.8 L8.6,1.6 L8.6,9.8 L0,9.8Z M9.6,1.5 L21,0 L21,9.8 L9.6,9.8Z M0,10.8 L8.6,10.8 L8.6,19 L0,17.8Z M9.6,10.8 L21,10.8 L21,20.6 L9.6,19.1Z" fill="#fff"/></svg>
<div class="r" style="left:60px;top:1030px;width:430px;height:50px;background:#f2f2f2;border:1px solid #c8c8c8"></div>
<svg class="r" style="left:74px;top:1043px;" width="22" height="24" viewBox="0 0 22 24"><circle cx="13" cy="8.5" r="6.8" fill="none" stroke="#222" stroke-width="1.6"/><path d="M8.2,13.3 L1.5,20.5" stroke="#222" stroke-width="1.8"/></svg>
<div class="t" style="left:110px;top:1046.92px;font-size:18.4px;color:#333;">Type here to search</div>
<svg class="r" style="left:509px;top:1046px;" width="20" height="20" viewBox="0 0 20 20"><circle cx="10" cy="10" r="7.5" fill="none" stroke="#fff" stroke-width="2.4"/></svg>
<svg class="r" style="left:570px;top:1045px;" width="22" height="22" viewBox="0 0 22 22"><rect x="1" y="5" width="13" height="11" fill="none" stroke="#fff" stroke-width="1.6"/><path d="M1,1.5h13M1,19.5h13M19,1v6M19,10v10" stroke="#fff" stroke-width="1.6"/></svg>
<div class="r" style="left:619px;top:1077px;width:41px;height:3px;background:#76b9ed"></div>
<div class="r" style="left:681px;top:1077px;width:51px;height:3px;background:#76b9ed"></div>
<div class="r" style="left:867px;top:1077px;width:51px;height:3px;background:#76b9ed"></div>
<div class="r" style="left:929px;top:1077px;width:40px;height:3px;background:#76b9ed"></div>
<div class="r" style="left:991px;top:1077px;width:51px;height:3px;background:#76b9ed"></div>
<div class="r" style="left:1053px;top:1077px;width:51px;height:3px;background:#76b9ed"></div>
<div class="r" style="left:1115px;top:1077px;width:51px;height:3px;background:#76b9ed"></div>
<div class="r" style="left:1172px;top:1077px;width:56px;height:3px;background:#76b9ed"></div>
<div class="r" style="left:1239px;top:1077px;width:51px;height:3px;background:#76b9ed"></div>
<div class="r" style="left:660px;top:1077px;width:10px;height:3px;background:#5a8ab0"></div>
<div class="r" style="left:969px;top:1077px;width:11px;height:3px;background:#5a8ab0"></div>
<div class="r" style="left:1228px;top:1077px;width:5px;height:3px;background:#5a7a98"></div>
<div class="r" style="left:1172px;top:1030px;width:56px;height:47px;background:rgba(255,255,255,0.21)"></div>
<div class="r" style="left:1228px;top:1030px;width:4px;height:50px;background:rgba(255,255,255,0.08)"></div>
<svg class="r" style="left:629px;top:1042px;" width="30" height="26" viewBox="0 0 30 26"><path d="M1,3 L1,24 L29,24 L29,6 L13,6 L11,3Z" fill="#f6c945"/><path d="M1,3 L11,3 L13,6 L1,6Z" fill="#e0a424"/><rect x="1" y="7" width="28" height="17" fill="#fcd867"/><path d="M10,24 L10,16 L20,16 L20,24 L17,24 L17,19 L13,19 L13,24Z" fill="#2a84d2"/></svg>
<svg class="r" style="left:690px;top:1040px;" width="31" height="31" viewBox="0 0 31 31"><defs><linearGradient id="edg" x1="0" y1="0" x2="1" y2="1"><stop offset="0" stop-color="#3cc4ef"/><stop offset="0.5" stop-color="#2a8fd6"/><stop offset="1" stop-color="#0d4a9a"/></linearGradient><linearGradient id="edg2" x1="0" y1="0" x2="1" y2="0"><stop offset="0" stop-color="#1e9ad8"/><stop offset="1" stop-color="#62d66a"/></linearGradient></defs><circle cx="15.5" cy="15.5" r="15" fill="url(#edg)"/><path d="M4,10 C7,2 20,0 27,7 C31,12 30,19 24,20 C18,21 14,18 17,14 C12,12 8,16 9,21 C5,18 3,14 4,10Z" fill="url(#edg2)"/><circle cx="17" cy="17" r="4" fill="#0d3a7a"/></svg>
<svg class="r" style="left:753px;top:1040px;" width="30" height="31" viewBox="0 0 30 31"><path d="M9,8 L9,4 C9,1 21,1 21,4 L21,8" fill="none" stroke="#ddd" stroke-width="2"/><rect x="1" y="8" width="28" height="22" fill="#f4f4f4"/><rect x="9" y="14" width="5" height="5" fill="#f25022"/><rect x="15" y="14" width="5" height="5" fill="#7fba00"/><rect x="9" y="20" width="5" height="5" fill="#00a4ef"/><rect x="15" y="20" width="5" height="5" fill="#ffb900"/></svg>
<svg class="r" style="left:815px;top:1041px;" width="31" height="28" viewBox="0 0 31 28"><path d="M1,10 L15.5,1 L30,10 L30,27 L1,27Z" fill="#0f6cbd"/><path d="M4,9 L27,9 L27,20 L4,20Z" fill="#fff"/><path d="M1,10 L15.5,20 L30,10 L30,27 L1,27Z" fill="#28a8ea"/><path d="M1,27 L15.5,15 L30,27Z" fill="#50c8f5"/></svg>
<svg class="r" style="left:876px;top:1041px;" width="32" height="31" viewBox="0 0 32 31"><circle cx="16" cy="6" r="4.5" fill="#7b83eb"/><circle cx="24.5" cy="8" r="3.2" fill="#5059c9"/><rect x="18" y="12" width="12" height="12" rx="3" fill="#5059c9"/><rect x="10" y="11" width="15" height="16" rx="4" fill="#7b83eb"/><rect x="1" y="7" width="15" height="15" rx="1.5" fill="#4b53bc"/><text x="4.5" y="19.5" font-size="12" font-weight="bold" font-family="Liberation Sans" fill="#fff">T</text><circle cx="24" cy="25" r="5.6" fill="#92c353" stroke="#fff" stroke-width="1.2"/><path d="M21,25 L23.3,27.3 L27,23" fill="none" stroke="#fff" stroke-width="1.6"/></svg>
<svg class="r" style="left:938px;top:1041px;" width="29" height="29" viewBox="0 0 29 29"><path d="M6,4 L27,2 L23,27 L2,25Z" fill="#9fd8e8" stroke="#7aa8b8"/><path d="M6,4 L27,2 L26,7 L5,9Z" fill="#cfe8f0"/><path d="M24,4 L28,26" stroke="#d8c060" stroke-width="1.4"/></svg>
<svg class="r" style="left:1001px;top:1040px;" width="29" height="29" viewBox="0 0 29 29"><rect x="1" y="1" width="27" height="27" rx="1.5" fill="#9a9030"/><rect x="4" y="4" width="21" height="21" fill="#eae6c8"/><text x="5" y="18" font-size="12" font-weight="bold" font-style="italic" font-family="Liberation Serif" fill="#8a8020">TxC</text><path d="M15,16 L27,14 L28,27 L16,28Z" fill="#f4f4f4" stroke="#bbb" stroke-width="0.6"/></svg>
<svg class="r" style="left:1063px;top:1041px;" width="30" height="30" viewBox="0 0 30 30"><path d="M2,6 L16,1 L22,9 L20,26 L8,29 L3,22Z" fill="#d4d4d8" stroke="#888" stroke-width="0.6"/><text x="4" y="20" font-size="17" font-weight="bold" font-family="Liberation Serif" fill="#2a30d8">T</text><path d="M28,3 L15,27" stroke="#222" stroke-width="2"/><path d="M26,6 L24,10" stroke="#c0a020" stroke-width="2"/></svg>
<svg class="r" style="left:1126px;top:1043px;" width="28" height="22" viewBox="0 0 28 22"><rect x="0.5" y="0.5" width="27" height="21" fill="#0c0c0c" stroke="#9a9a9a" stroke-width="1.2"/><rect x="1" y="1" width="26" height="2.5" fill="#bdbdbd"/><path d="M3,6 L5,7.5 L3,9 M7,9.5 L13,9.5" stroke="#bbb" stroke-width="0.8" fill="none"/></svg>
<svg class="r" style="left:1189px;top:1045px;" width="27" height="20" viewBox="0 0 27 20"><polygon points="6,0 11,0 5,19 0,19" fill="#c62028"/><polygon points="14,0 19,0 13,19 8,19" fill="#1f9b48"/><polygon points="22,0 27,0 21,19 16,19" fill="#0e52a4"/></svg>
<svg class="r" style="left:1252px;top:1040px;" width="24" height="30" viewBox="0 0 24 30"><rect x="0.5" y="0.5" width="23" height="29" rx="2" fill="#5f6f80"/><rect x="3" y="3" width="18" height="4.5" fill="#38c8f0"/><rect x="3.0" y="10.0" width="4.8" height="5" fill="#c8d8e8"/><rect x="9.2" y="10.0" width="4.8" height="5" fill="#c8d8e8"/><rect x="15.4" y="10.0" width="4.8" height="5" fill="#c8d8e8"/><rect x="3.0" y="16.3" width="4.8" height="5" fill="#c8d8e8"/><rect x="9.2" y="16.3" width="4.8" height="5" fill="#c8d8e8"/><rect x="3.0" y="22.6" width="4.8" height="5" fill="#c8d8e8"/><rect x="9.2" y="22.6" width="4.8" height="5" fill="#c8d8e8"/><rect x="15.4" y="16.3" width="4.8" height="11.3" fill="#1a5ea8"/></svg>
<svg class="r" style="left:1574px;top:1050px;" width="17" height="10" viewBox="0 0 17 10"><path d="M1,9 L8.5,1.5 L16,9" fill="none" stroke="#fff" stroke-width="1.4"/></svg>
<svg class="r" style="left:1601px;top:1047px;" width="24" height="20" viewBox="0 0 24 20"><path d="M3,14 C0,14 0,9 3,9 C3,5 8,4 10,6 C12,2 19,3 19,8 C22,8 22,14 19,14Z" fill="#d8d8d8"/><circle cx="15" cy="13" r="5.5" fill="#e81123" stroke="#2a1c1e"/><path d="M13,11 L17,15 M17,11 L13,15" stroke="#fff" stroke-width="1.3"/></svg>
<svg class="r" style="left:1632px;top:1047px;" width="21" height="15" viewBox="0 0 21 15"><path d="M1,1v4M4,1v4M0,5h5v2l-2,2v5" stroke="#fff" stroke-width="1.1" fill="none"/><rect x="6" y="4" width="13" height="9" fill="none" stroke="#fff" stroke-width="1.1"/><rect x="19" y="7" width="1.5" height="3" fill="#fff"/><rect x="7.5" y="5.5" width="5" height="6" fill="#fff"/></svg>
<svg class="r" style="left:1665px;top:1046px;" width="17" height="18" viewBox="0 0 17 18"><path d="M2,16 A14,14 0 0 1 16,2 M5,16 A11,11 0 0 1 16,5 M8,16 A8,8 0 0 1 16,8 M11,16 A5,5 0 0 1 16,11" fill="none" stroke="#fff" stroke-width="1.1"/><circle cx="15" cy="15.5" r="1.4" fill="#fff"/></svg>
<svg class="r" style="left:1691px;top:1046px;" width="22" height="19" viewBox="0 0 22 19"><path d="M1,6 L5,6 L10,1.5 L10,17.5 L5,13 L1,13Z" fill="none" stroke="#fff" stroke-width="1.1"/><path d="M13,7 A3,3 0 0 1 13,12 M16,4.5 A6.5,6.5 0 0 1 16,14.5" fill="none" stroke="#fff" stroke-width="1.1"/><path d="M19,2 A10,10 0 0 1 19,17" fill="none" stroke="#888" stroke-width="1.1"/></svg>
<div class="t" style="left:1725px;top:1048.15px;font-size:14px;color:#fff;">ENG</div>
<div class="t" style="left:1791px;top:1036.61px;font-size:14.4px;color:#fff;">17:48</div>
<div class="t" style="left:1771px;top:1059.41px;font-size:14.4px;color:#fff;letter-spacing:0.45px">10/09/2020</div>
<svg class="r" style="left:1868px;top:1044px;" width="32" height="32" viewBox="0 0 32 32"><path d="M1,1 L21,1 L21,14 L11,14 L8,18 L8,14 L1,14Z" fill="#fff"/><path d="M4,4.5h14M4,7.5h14M4,10.5h10" stroke="#2a2a2a" stroke-width="1.2"/><circle cx="20.5" cy="20.5" r="9.5" fill="#2a2a2a" stroke="#888" stroke-width="1"/><text x="16" y="25.5" font-size="13" font-weight="bold" font-family="Liberation Sans" fill="#fff">4</text></svg>
<div class="r" style="left:1914px;top:1030px;width:1px;height:50px;background:#6a5a5a"></div>
</body></html>
